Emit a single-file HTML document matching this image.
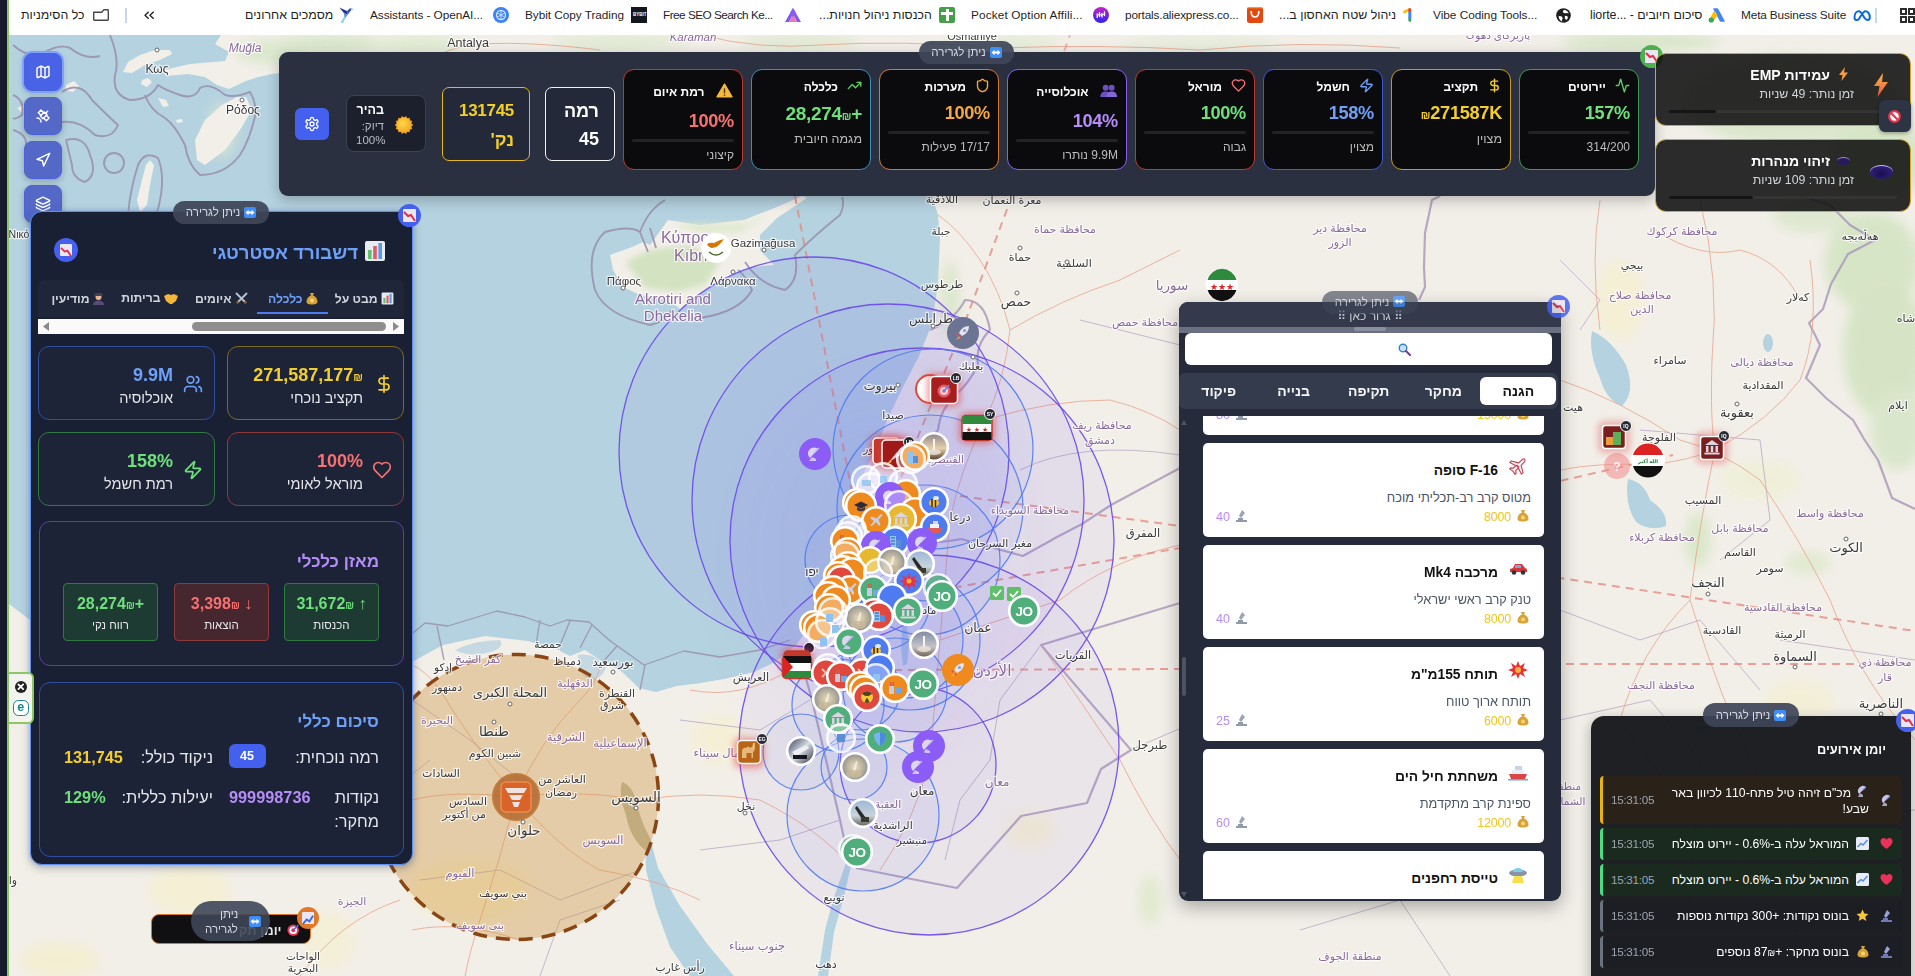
<!DOCTYPE html>
<html lang="he">
<head>
<meta charset="utf-8">
<title>Strategic Dashboard</title>
<style>
*{box-sizing:border-box;margin:0;padding:0}
html,body{width:1915px;height:976px;overflow:hidden;background:#f2efe9;font-family:"Liberation Sans","DejaVu Sans",sans-serif;color:#fff}
.abs{position:absolute}
#strip{position:absolute;left:0;top:0;width:7px;height:976px;background:#171b2d}
#strip2{position:absolute;left:7px;top:0;width:2px;height:976px;background:#8cc665}
#bm{position:absolute;left:9px;top:0;width:1906px;height:35px;background:#fff;color:#1f1f1f;font-size:12.5px}
#bm span{position:absolute;top:8px;white-space:nowrap;line-height:15px}
#bm i{position:absolute;display:block}
#map{position:absolute;left:9px;top:35px;width:1906px;height:941px}
.t{position:absolute;white-space:nowrap;line-height:1}
.r{direction:rtl;text-align:right}
</style>
</head>
<body>
<style>
#bm{left:0;width:1915px}
#bm span{top:8px;font-size:12.4px;color:#1f1f1f}
#bm span.h{direction:rtl}
</style>
<div id="bm">
<span class="h" style="left:21px">כל הסימניות</span>
<svg class="abs" style="left:93px;top:9px" width="16" height="12" viewBox="0 0 16 12" fill="none" stroke="#474747" stroke-width="1.400" stroke-linejoin="round"><path d="M0.700 3.200h8.300l1.700-2.400h3.900a.7.700 0 0 1 .7.700v9.100a.7.700 0 0 1-.7.700H1.400a.7.700 0 0 1-.7-.7z"/></svg>
<i style="left:125px;top:8px;width:1.5px;height:15px;background:#c7d6ea"></i>
<svg class="abs" style="left:144px;top:10.800px" width="10.500" height="8.500" viewBox="0 0 11.500 9.500" fill="none" stroke="#222" stroke-width="1.500" stroke-linejoin="round"><path d="M5.200 0.800L1 4.750 5.200 8.700M10.700 0.800L6.500 4.750 10.700 8.700"/></svg>
<span class="h" style="left:245px">מסמכים אחרונים</span>
<svg class="abs" style="left:339px;top:7px" width="16" height="16" viewBox="0 0 16 16"><path d="M0.300 0.500L8 4l.500 4-4-2.500z" fill="#27348b"/><path d="M8 4l3.500-3.200.800 2.200L8.500 8z" fill="#3f51b5"/><path d="M11.500.800L15 2.200l-2.700.800z" fill="#7ac8ee"/><path d="M4.500 5.500l4 2.500-2.500 3.500-2.200 4H2l3.500-6z" fill="#5c8fe0"/><path d="M5.500 9.500L2 15.500h1.800l2.200-4z" fill="#8ad4f0"/></svg>
<span style="left:370px;font-size:11.8px;letter-spacing:-0.05px">Assistants - OpenAI...</span>
<svg class="abs" style="left:493px;top:7px" width="16" height="16" viewBox="0 0 16 16"><circle cx="8" cy="8" r="8" fill="#3b82f6"/><circle cx="8" cy="8" r="4.500" fill="none" stroke="#cfe2ff" stroke-width="1.3"/><path d="M8 3.500v9M4 5.800l8 4.500M12 5.800l-8 4.500" stroke="#cfe2ff" stroke-width=".9"/></svg>
<span style="left:525px;font-size:11.8px;letter-spacing:-0.04px">Bybit Copy Trading</span>
<i style="left:631px;top:7px;width:16px;height:16px;background:#15171f"></i><div class="t" style="left:633px;top:13px;font-size:4.500px;color:#fff;font-weight:bold">BYBIT</div>
<span style="left:663px;font-size:11.8px;letter-spacing:-0.53px">Free SEO Search Ke...</span>
<svg class="abs" style="left:785px;top:8px" width="16" height="14" viewBox="0 0 16 14"><path d="M8 0 L16 14 L12 14 L8 6 L4 14 L0 14Z" fill="#7c5cf0"/><path d="M8 6 L12 14 L4 14Z" fill="#f472b6"/><path d="M8 0 L11 5 L8 9 L5 5Z" fill="#8b5cf6"/></svg>
<span class="h" style="left:819px">הכנסות ניהול חנויות...</span>
<i style="left:939px;top:7px;width:16px;height:16px;background:#43a047;border-radius:2px"></i><i style="left:946px;top:9px;width:2.500px;height:12px;background:#fff"></i><i style="left:941px;top:12px;width:12px;height:2.500px;background:#fff"></i>
<span style="left:971px;font-size:11.8px;letter-spacing:0.13px">Pocket Option Affili...</span>
<svg class="abs" style="left:1093px;top:7px" width="16" height="16" viewBox="0 0 16 16"><defs><linearGradient id="po" x1="0" y1="0" x2="0" y2="1"><stop offset="0" stop-color="#c822c8"/><stop offset="1" stop-color="#2a22f2"/></linearGradient></defs><circle cx="8" cy="8" r="8" fill="url(#po)"/><path d="M4.200 10.500V7M6.500 9.500V5.500M9 10V6.500M11.500 8.500V4.800" stroke="#fff" stroke-width="1.300" stroke-linecap="round"/><path d="M4.200 8.500L6.500 7.300 9 8.500 11.500 6.500" stroke="#fff" stroke-width="1" fill="none"/></svg>
<span style="left:1125px;font-size:11.8px;letter-spacing:-0.16px">portals.aliexpress.co...</span>
<svg class="abs" style="left:1247px;top:7px" width="16" height="16" viewBox="0 0 16 16"><rect width="16" height="16" rx="2.500" fill="#e2480f"/><path d="M2 0h12a2 2 0 0 1 1.800 1.200H0.200A2 2 0 0 1 2 0z" fill="#f5a02a"/><path d="M4.200 4.500Q4.200 10 8 10T11.800 4.500" stroke="#fff" stroke-width="1.700" fill="none" stroke-linecap="round"/></svg>
<span class="h" style="left:1279px">ניהול שטח האחסון ב...</span>
<svg class="abs" style="left:1403px;top:7px" width="12" height="16" viewBox="0 0 12 16"><path d="M1.400 5L6 2.600" stroke="#fbbc04" stroke-width="2.700" stroke-linecap="round"/><path d="M5.300 2.500a1.500 1.500 0 0 1 3 0V5h-3z" fill="#ea4335"/><rect x="5.300" y="4.500" width="3" height="7.500" fill="#4285f4"/><path d="M5.300 11.500h3v1.700a1.500 1.500 0 0 1-3 0z" fill="#34a853"/></svg>
<span style="left:1433px;font-size:11.8px;letter-spacing:-0.01px">Vibe Coding Tools...</span>
<svg class="abs" style="left:1555.500px;top:7.500px" width="15" height="15" viewBox="0 0 15 15"><circle cx="7.500" cy="7.500" r="7.300" fill="#1f1f1f"/><path d="M8.500 1.800Q6.200 2.600 7 4.300 8 5.600 10 5.200 11.800 4.600 12.600 5.600 12.200 3 8.500 1.800z" fill="#fff"/><path d="M2.600 8.200Q4.600 7.600 6 8.800 7.400 10.200 6.200 11.800 5.200 13 6.600 13.600 3 12.600 2.600 8.200z" fill="#fff"/><path d="M9 8Q10.500 7.400 11.600 8.600 12.400 10 11 11.400 9.600 12.200 9 10.600 8.400 9 9 8z" fill="#fff"/></svg>
<span style="left:1590px;letter-spacing:-0.08px"><span style="position:static;direction:ltr;unicode-bidi:isolate">liorte... - </span><span class="h" style="position:static">סיכום חיובים</span></span>
<svg class="abs" style="left:1708px;top:8px" width="17" height="15" viewBox="0 0 17 15"><path d="M6 1 L9.500 1 L16 13 L12.500 13Z" fill="#4285f4" stroke="#4285f4" stroke-width="1.500" stroke-linejoin="round"/><path d="M6.500 3 L9 7 L5 13.500 L1.500 12Z" fill="#fbbc04" stroke="#fbbc04" stroke-width="1" stroke-linejoin="round"/><circle cx="3.200" cy="12" r="2.600" fill="#34a853"/></svg>
<span style="left:1741px;font-size:11.8px;letter-spacing:-0.13px">Meta Business Suite</span>
<svg class="abs" style="left:1853px;top:10px" width="18" height="11" viewBox="0 0 18 11" fill="none" stroke="#0668e1" stroke-width="2"><path d="M1.500 7.500C1.500 3 4 1.200 5.800 1.200 8.500 1.200 10 6 12 8.500 13 9.800 14 10 14.800 10 16 10 16.800 9 16.800 7.200 16.800 3.500 14.500 1.200 12.500 1.200 10 1.200 8 6 6 8.800 5 10 4.200 10 3.500 10 2.300 10 1.500 9 1.500 7.500Z"/></svg>
<i style="left:1875px;top:8px;width:1.500px;height:15px;background:#c7d6ea"></i>
<svg class="abs" style="left:1899.500px;top:8px" width="15" height="15" viewBox="0 0 15 15" fill="none" stroke="#222" stroke-width="1.900"><rect x="1" y="1" width="5" height="5"/><rect x="9" y="1" width="5" height="5"/><rect x="1" y="9" width="5" height="5"/><rect x="9" y="9" width="5" height="5"/></svg>
</div>
<div id="strip"></div><div id="strip2"></div>
<svg id="map" viewBox="9 35 1906 941" font-family="'Liberation Sans','DejaVu Sans',sans-serif">
<defs>
<filter id="bl6" x="-30%" y="-30%" width="160%" height="160%"><feGaussianBlur stdDeviation="6"/></filter>
<filter id="bl3" x="-30%" y="-30%" width="160%" height="160%"><feGaussianBlur stdDeviation="3"/></filter>
<filter id="bl14" x="-50%" y="-50%" width="200%" height="200%"><feGaussianBlur stdDeviation="14"/></filter>
<filter id="bl40" x="-50%" y="-50%" width="200%" height="200%"><feGaussianBlur stdDeviation="40"/></filter>
<filter id="glow" x="-50%" y="-50%" width="200%" height="200%"><feGaussianBlur stdDeviation="3.500"/></filter>
<clipPath id="cm"><rect x="9" y="35" width="1906" height="941"/></clipPath>
<radialGradient id="ph1"><stop offset="0" stop-color="#e8dcc0"/><stop offset=".6" stop-color="#b8b09a"/><stop offset="1" stop-color="#8a9098"/></radialGradient>
<linearGradient id="ph2" x1="0" y1="0" x2="0" y2="1"><stop offset="0" stop-color="#9ab6d6"/><stop offset=".6" stop-color="#c8d4dc"/><stop offset="1" stop-color="#5a5a50"/></linearGradient>
<linearGradient id="ph3" x1="0" y1="0" x2="0" y2="1"><stop offset="0" stop-color="#8a8490"/><stop offset=".55" stop-color="#e8cfa8"/><stop offset="1" stop-color="#4a3424"/></linearGradient>
<linearGradient id="ph4" x1="0" y1="0" x2="1" y2="1"><stop offset="0" stop-color="#2a3450"/><stop offset=".5" stop-color="#d8dce4"/><stop offset="1" stop-color="#1e2230"/></linearGradient>
<linearGradient id="ph5" x1="0" y1="0" x2="0" y2="1"><stop offset="0" stop-color="#7a86a0"/><stop offset=".6" stop-color="#c4c4c8"/><stop offset="1" stop-color="#6a5848"/></linearGradient>
</defs>
<rect x="9" y="35" width="1906" height="941" fill="#b5d2e0"/>
<path fill="#f2efe9" d="M221,35 L215,44 229,52 225,61 190,64 164,70 166,76 188,74 205,77 217,85 229,89 246,81 258,77 272,74 279,73 300,150 920,150 932,196 938,215 940,239 938,284 932,324 919,356 903,387 888,418 876,449 860,480 849,511 837,550 830,578 820,603 809,628 796,645 775,662 754,672 724,679 698,683.5 677,686 656,692 639,688 621,671 600,660 585,650 570,656 558,650 528,641 485,636 443,645 412,662 300,640 30,620 9,604 9,976 1915,976 1915,35Z"/>
<g filter="url(#bl6)" opacity=".75">
<ellipse cx="330" cy="44" rx="60" ry="9" fill="#cfe3c0"/>
<ellipse cx="270" cy="52" rx="35" ry="12" fill="#d3e5c4"/>
<ellipse cx="420" cy="44" rx="50" ry="8" fill="#d8e8c8"/>
<ellipse cx="620" cy="42" rx="70" ry="8" fill="#dbe8cc"/>
<ellipse cx="1000" cy="42" rx="60" ry="8" fill="#dfe9d0"/>
<ellipse cx="1872" cy="262" rx="48" ry="50" fill="#cfe2bc"/>
<ellipse cx="1885" cy="350" rx="42" ry="70" fill="#cde1ba"/>
<ellipse cx="1898" cy="430" rx="28" ry="40" fill="#d3e4c2"/>
<ellipse cx="1812" cy="215" rx="40" ry="18" fill="#d8e6c8"/>
<ellipse cx="1790" cy="100" rx="110" ry="45" fill="#d4e4c4"/>
<ellipse cx="1880" cy="160" rx="50" ry="40" fill="#cfe2bc"/>
<ellipse cx="1200" cy="44" rx="80" ry="8" fill="#e2ead6"/>
<ellipse cx="950" cy="300" rx="10" ry="40" fill="#d5e4c4"/>
<ellipse cx="930" cy="400" rx="8" ry="30" fill="#dbe6cc"/>
<ellipse cx="1845" cy="950" rx="30" ry="25" fill="#dbe8c8"/>
<ellipse cx="1150" cy="900" rx="12" ry="25" fill="#dce8c8"/>
<ellipse cx="222" cy="130" rx="14" ry="28" fill="#dde8cf"/>
<ellipse cx="1640" cy="42" rx="80" ry="9" fill="#cfe2bc"/>
<ellipse cx="1698" cy="540" rx="13" ry="28" fill="#d3e5c0"/>
<ellipse cx="1808" cy="563" rx="22" ry="12" fill="#dbe8c8"/>
<ellipse cx="1760" cy="480" rx="40" ry="20" fill="#eef0d4"/>
<ellipse cx="800" cy="42" rx="60" ry="7" fill="#d8e6c8"/>
</g>
<g filter="url(#bl6)" opacity=".6">
<ellipse cx="470" cy="890" rx="60" ry="30" fill="#f6eec0"/>
<ellipse cx="720" cy="740" rx="30" ry="25" fill="#f7efcb"/>
<ellipse cx="1620" cy="300" rx="25" ry="40" fill="#f6efc8"/>
<ellipse cx="1480" cy="820" rx="25" ry="35" fill="#f6f0cf"/>
<ellipse cx="1800" cy="700" rx="35" ry="20" fill="#f5efcc"/>
<ellipse cx="1030" cy="830" rx="25" ry="18" fill="#f4edc8"/>
<ellipse cx="190" cy="890" rx="42" ry="24" fill="#f6efc8"/>
<ellipse cx="60" cy="960" rx="40" ry="18" fill="#f5edc4"/>
<ellipse cx="330" cy="940" rx="25" ry="30" fill="#f6efcc"/>
</g>
<g fill="#b5d2e0">
<path d="M645,840 L650,838 658,868 680,906 708,945 734,976 690,976 670,947 656,908 646,870Z"/>
<path d="M847,860 L852,862 843,900 834,932 828,976 818,976 825,930 833,900Z"/>
<path d="M902,626 L907,626 909,645 907,664 903,666 901,650Z"/>
<path d="M1592,331 Q1612,340 1626,365 Q1636,392 1622,406 Q1606,400 1600,378 Q1588,352 1592,331Z"/>
<path d="M1628,479 Q1644,482 1650,500 Q1668,512 1666,526 Q1650,532 1636,522 Q1624,504 1628,479Z"/>
<ellipse cx="1768" cy="343" rx="5" ry="9"/>
<ellipse cx="1700" cy="730" rx="10" ry="4"/>
<path d="M578,655 Q595,652 606,668 Q600,682 588,680 Q578,672 578,655Z" opacity=".75"/>
<path d="M455,650 Q475,640 500,640 Q505,648 490,652 Q470,658 455,650Z" opacity=".75"/>
</g>
<path d="M622,782 Q632,785 636,800 Q640,820 650,838 Q655,850 645,850 Q630,838 626,815 Q618,795 622,782Z" fill="#b9b8a2"/>
<g fill="#f2efe9">
<path d="M246,97 L252,110 240,130 225,150 205,165 197,160 195,140 205,120 222,105 237,97Z"/>
<path d="M123,72 L128,62 140,55 155,50 170,50 172,54 160,60 145,65 132,73Z"/>
<path d="M150,160 L154,165 150,185 147,205 140,212 137,200 142,180 146,165Z"/>
<path d="M66,85 l8,-4 5,5 -6,6 -8,-2z M142,80 l6,-2 4,4 -5,5 -6,-3z M158,98 l8,2 3,6 -6,1z M176,120 l6,-1 1,3 -6,1z M17,108 l6,-3 4,4 -5,4z"/>
<path d="M610,255 L632,247 643,242 650,245 668,220 700,225 744,220 777,207 802,196 807,198 777,218 760,235 760,250 774,265 752,267 735,274 710,287 694,297 680,309 669,300 640,295 623,287 613,270Z"/>
</g>
<path d="M625,262 L650,250 690,245 720,262 705,285 675,292 645,288Z" fill="#d3e2c0" filter="url(#bl3)"/>
<path d="M672,224 L745,224 790,206 770,214 740,232 700,232Z" fill="#dde8cc" filter="url(#bl3)"/><g fill="none" stroke="#9a93ae" stroke-width="1.900" opacity=".9" stroke-linejoin="round">
<path d="M13,45 Q30,60 45,52 T70,48 Q85,60 100,56"/>
<path d="M110,35 Q120,60 115,75 Q112,95 130,100 Q150,100 158,85 Q165,90 180,95 Q195,100 200,88 Q210,82 225,95 Q235,98 250,92 Q255,100 256,112 Q250,140 240,155 Q225,175 200,175 Q188,165 185,145 Q175,125 165,118 Q150,110 145,95"/>
<path d="M62,92 Q80,80 92,100 Q110,118 118,125 Q112,140 95,135 Q80,120 62,122"/>
<path d="M66,140 Q85,135 90,155 Q98,175 85,182 Q72,178 72,165Z"/>
<circle cx="114" cy="163" r="10"/>
<path d="M128,215 Q130,190 138,165 Q145,150 158,158 Q165,175 160,200 Q158,215 150,222"/>
<path d="M13,95 Q25,100 22,115 Q15,120 13,118 M13,130 Q30,135 25,150"/>
<path d="M413,633 L425,623 448,626 497,611 525,617 550,626 567,620 589,622 609,640 644,665 684,651 720,657 760,650 790,640 M437,626 L444,660 M540,620 L536,645 M570,621 L560,645 M592,625 L580,648 M617,646 L600,665 M645,665 L640,690" stroke-width="1.300"/>
<path d="M595,290 Q585,250 605,232 Q630,225 640,232 Q648,210 665,200 M640,232 L648,252 M650,228 L656,248"/>
<path d="M595,290 Q605,315 650,325 Q665,322 672,310 M700,318 Q740,312 752,290 Q745,275 738,270"/>
<path d="M745,262 Q760,285 785,290 Q800,280 795,255 Q815,235 840,215 Q845,205 842,197"/>
</g>
<g fill="none" stroke="#a896b8" stroke-linejoin="round" opacity=".8">
<path stroke-width="2.200" d="M856,868 L957,888 1021,816 1087,803 1101,769 1131,750 1041,645 1180,603"/>
<path stroke-width="2.200" d="M800,657 L812,700 826,760 840,820 850,866"/>
<path stroke-width="2.200" d="M905,540 Q930,545 961,539 L1023,556 1057,537 1082,524 1111,505 1180,468"/>
<path stroke-width="2.200" d="M930,330 Q955,320 965,300 Q985,300 990,330 Q975,345 978,365 Q968,385 955,395 Q940,410 938,430 Q925,445 912,470"/>
<path stroke-width="2.200" d="M1560,720 L1590,690 1700,640 1800,560 1850,520 1915,500" opacity=".0"/>
<path stroke-width="2.200" d="M1800,196 L1830,205 1850,225 1875,240 1848,254 1831,284 1823,309 1809,323 1820,345 1806,378 1826,398 1853,420 1864,439 1878,460 1892,498 1915,509"/>
<path stroke-width="2.200" d="M1440,196 L1432,200 1425,233 1424,267 1425,287 1419,300"/>
<g stroke-width="1" stroke="#b9a9c6">
<path d="M1041,645 L1000,700 990,760 960,800 945,860"/>
<path d="M1080,320 L1180,345"/>
<path d="M1020,470 Q1080,440 1180,455"/>
<path d="M1560,260 L1600,300 1580,330 M1560,610 L1640,640 1700,620 1760,690 M1640,430 L1760,440 1770,520 1720,560 M1700,820 L1915,810 M1780,640 L1915,660 M1560,720 L1650,700 1700,760 1690,900"/>
<path d="M412,700 L470,740 520,780 M420,880 L500,870 560,900 640,870 M430,760 L380,800 M540,976 L560,920 620,900"/>
<path d="M680,720 L760,730 810,700 M700,850 L780,840 840,820"/>
<path d="M1130,750 L1200,720 M1300,930 L1400,900 1450,976"/>
</g></g>
<g fill="none" stroke="#e9a38a" stroke-width="1" opacity=".8">
<path d="M938,215 Q960,230 980,260 Q1000,290 1010,330 Q1005,380 985,420 Q960,470 950,520 Q945,580 940,640 Q935,700 930,760 Q915,820 880,870"/>
<path d="M1010,330 Q1060,300 1120,280 Q1160,260 1180,250"/>
<path d="M985,420 Q1050,400 1110,400 Q1150,410 1180,430"/>
<path d="M940,640 Q1000,620 1060,600 Q1110,560 1180,545"/>
<path d="M1041,645 Q1080,700 1120,760 Q1150,820 1180,860"/>
<path d="M1560,380 Q1620,400 1680,440 Q1720,450 1760,480 Q1800,540 1830,600 Q1860,680 1915,740"/>
<path d="M1700,200 Q1720,280 1712,360 Q1710,420 1715,450 Q1700,520 1690,600 Q1720,700 1760,780 Q1800,860 1860,930"/>
<path d="M1560,470 Q1600,462 1650,465 Q1690,460 1715,450"/>
<path d="M1715,450 Q1770,420 1800,380 Q1820,330 1810,260"/>
<path d="M1690,600 Q1640,650 1620,720 Q1660,780 1700,820 Q1760,880 1800,940"/>
<path d="M516,797 Q540,740 580,700 Q600,680 600,662 M516,797 Q470,740 440,690 Q425,670 412,665 M516,797 Q570,790 630,798 M516,797 Q500,860 480,920 Q470,950 465,976 M516,797 Q450,790 412,800 M516,797 Q560,850 600,870 Q660,880 700,900"/>
<path d="M640,800 Q700,790 760,800 Q820,830 850,866"/>
<path d="M690,690 Q740,700 790,670"/>
<path d="M412,930 Q460,920 520,940 M300,976 Q340,920 400,900"/>
<path d="M300,150 Q400,60 468,45 Q520,40 600,50 M700,35 Q760,50 820,45 Q900,40 1000,48 Q1100,44 1200,50 Q1300,40 1400,48"/>
<path d="M1655,230 Q1700,260 1740,250 Q1780,260 1800,300 M1600,200 Q1590,260 1600,330"/>
</g>
<g fill="none" stroke="#e58b80" stroke-width="2" stroke-dasharray="8 6" opacity=".8">
<path d="M795,196 L852,492"/>
<path d="M1012,196 L962,330 900,480"/>
<path d="M1012,196 L1070,35" opacity=".7"/>
<path d="M940,590 L1180,548 1560,481 1673,455"/>
<path d="M960,496 L1180,526 1560,578 1915,631"/>
<path d="M880,670 L1180,669 1560,664 1915,664"/>
</g><g clip-path="url(#cm)">
<ellipse cx="880" cy="560" rx="120" ry="170" fill="#8a80ee" opacity=".10" filter="url(#bl40)"/>
<circle cx="814" cy="452" r="195" fill="#6a48ea" fill-opacity=".055" stroke="#6a48ea" stroke-width="1.300" stroke-opacity=".9"/>
<circle cx="888" cy="500" r="196" fill="#6a48ea" fill-opacity=".055" stroke="#6a48ea" stroke-width="1.300" stroke-opacity=".9"/>
<circle cx="922" cy="540" r="192" fill="#6a48ea" fill-opacity=".055" stroke="#6a48ea" stroke-width="1.300" stroke-opacity=".9"/>
<circle cx="929" cy="745" r="190" fill="#6a48ea" fill-opacity=".055" stroke="#6a48ea" stroke-width="1.300" stroke-opacity=".9"/>
<circle cx="918" cy="765" r="78" fill="#6a48ea" fill-opacity=".055" stroke="#6a48ea" stroke-width="1.300" stroke-opacity=".9"/>
<circle cx="933" cy="449" r="100" fill="#4f7bf0" fill-opacity=".06" stroke="#4f7bf0" stroke-width="1.200" stroke-opacity=".9"/>
<circle cx="930" cy="508" r="93" fill="#4f7bf0" fill-opacity=".06" stroke="#4f7bf0" stroke-width="1.200" stroke-opacity=".9"/>
<circle cx="925" cy="560" r="75" fill="#4f7bf0" fill-opacity=".06" stroke="#4f7bf0" stroke-width="1.200" stroke-opacity=".9"/>
<circle cx="910" cy="640" r="70" fill="#4f7bf0" fill-opacity=".06" stroke="#4f7bf0" stroke-width="1.200" stroke-opacity=".9"/>
<circle cx="905" cy="640" r="58" fill="#4f7bf0" fill-opacity=".06" stroke="#4f7bf0" stroke-width="1.200" stroke-opacity=".9"/>
<circle cx="863" cy="815" r="76" fill="#4f7bf0" fill-opacity=".06" stroke="#4f7bf0" stroke-width="1.200" stroke-opacity=".9"/>
<circle cx="801" cy="752" r="38" fill="#4f7bf0" fill-opacity=".06" stroke="#4f7bf0" stroke-width="1.200" stroke-opacity=".9"/>
<circle cx="854" cy="767" r="33" fill="#4f7bf0" fill-opacity=".06" stroke="#4f7bf0" stroke-width="1.200" stroke-opacity=".9"/>
<circle cx="838" cy="705" r="46" fill="#4f7bf0" fill-opacity=".06" stroke="#4f7bf0" stroke-width="1.200" stroke-opacity=".9"/>
<circle cx="880" cy="600" r="50" fill="#4f7bf0" fill-opacity=".06" stroke="#4f7bf0" stroke-width="1.200" stroke-opacity=".9"/>
<circle cx="850" cy="560" r="45" fill="#4f7bf0" fill-opacity=".06" stroke="#4f7bf0" stroke-width="1.200" stroke-opacity=".9"/>
<circle cx="860" cy="690" r="40" fill="#4f7bf0" fill-opacity=".06" stroke="#4f7bf0" stroke-width="1.200" stroke-opacity=".9"/>
<circle cx="895" cy="690" r="52" fill="#4f7bf0" fill-opacity=".06" stroke="#4f7bf0" stroke-width="1.200" stroke-opacity=".9"/>
</g>
<circle cx="516" cy="797" r="142.500" fill="#cf9846" fill-opacity=".40" stroke="#8a4513" stroke-width="3.500" stroke-dasharray="14 9"/>
<circle cx="516" cy="797" r="23" fill="#a85a1e" fill-opacity=".75" stroke="#c47a3a" stroke-width="2"/>
<rect x="501" y="782" width="30" height="30" rx="5" fill="#d8642a" stroke="#f08a4a" stroke-width="1.500"/>
<path d="M505,788 h22 l-3,5 h-16z M509,795 h14 l-3,5 h-8z M512,802 h8 l-2,5 h-4z" fill="#f1e4e0"/><g text-anchor="middle" stroke="#fff" stroke-opacity=".75" stroke-width="2.400" paint-order="stroke" stroke-linejoin="round" font-family="'Liberation Sans','DejaVu Sans',sans-serif">
<text x="157" y="73" font-size="12" fill="#3a3a3a">Κως</text>
<text x="243" y="114" font-size="12" fill="#3a3a3a">Ρόδος</text>
<text x="245" y="52" font-size="12" fill="#8a6a9c" font-style="italic">Muğla</text>
<text x="468" y="47" font-size="12.5" fill="#3a3a3a">Antalya</text>
<text x="19" y="238" font-size="10.5" fill="#3a3a3a">Νικό</text>
<text x="693" y="41" font-size="11.5" fill="#8a6a9c" font-style="italic">Karaman</text>
<text x="972" y="40" font-size="11" fill="#3a3a3a">Osmaniye</text>
<text x="1498" y="39" font-size="10.5" fill="#8a6a9c">پارێزگای دهۆک</text>
<text x="689" y="243" font-size="16" fill="#8a6a9c">Κύπρος</text>
<text x="695" y="261" font-size="16" fill="#8a6a9c">Kıbrıs</text>
<text x="763" y="247" font-size="11.5" fill="#3a3a3a">Gazimağusa</text>
<text x="624" y="285" font-size="11.5" fill="#3a3a3a">Πάφος</text>
<text x="733" y="285" font-size="11.5" fill="#3a3a3a">Λάρνακα</text>
<text x="673" y="304" font-size="15" fill="#8a6a9c">Akrotiri and</text>
<text x="673" y="321" font-size="15" fill="#8a6a9c">Dhekelia</text>
<text x="942" y="203" font-size="11" fill="#3a3a3a">اللاذقية</text>
<text x="1012" y="204" font-size="11" fill="#3a3a3a">معرة النعمان</text>
<text x="941" y="235" font-size="10.5" fill="#3a3a3a">جبلة</text>
<text x="1065" y="233" font-size="11" fill="#8a6a9c">محافظة حماة</text>
<text x="1020" y="261" font-size="11" fill="#3a3a3a">حماة</text>
<text x="1074" y="267" font-size="11" fill="#3a3a3a">السلمية</text>
<text x="942" y="288" font-size="11" fill="#3a3a3a">طرطوس</text>
<text x="1016" y="306" font-size="12.5" fill="#3a3a3a">حمص</text>
<text x="1172" y="290" font-size="13.5" fill="#8a6a9c">سوريا</text>
<text x="1145" y="326" font-size="11" fill="#8a6a9c">محافظة حمص</text>
<text x="931" y="323" font-size="12.5" fill="#3a3a3a">طرابلس</text>
<text x="971" y="370" font-size="11" fill="#3a3a3a">بعلبك</text>
<text x="880" y="390" font-size="13" fill="#3a3a3a">بيروت</text>
<text x="893" y="419" font-size="11" fill="#3a3a3a">صيدا</text>
<text x="1102" y="429" font-size="11" fill="#8a6a9c">محافظة ريف</text>
<text x="1100" y="444" font-size="11" fill="#8a6a9c">دمشق</text>
<text x="945" y="463" font-size="10.5" fill="#8a6a9c">القنيطرة</text>
<text x="873" y="452" font-size="10.5" fill="#3a3a3a">صور</text>
<text x="960" y="521" font-size="11.5" fill="#3a3a3a">درعا</text>
<text x="1030" y="514" font-size="11" fill="#8a6a9c">محافظة السويداء</text>
<text x="1000" y="547" font-size="11" fill="#3a3a3a">مغير السرحان</text>
<text x="1143" y="537" font-size="11.5" fill="#3a3a3a">المفرق</text>
<text x="1340" y="232" font-size="11" fill="#8a6a9c">محافظة دير</text>
<text x="1340" y="246" font-size="11" fill="#8a6a9c">الزور</text>
<text x="812" y="576" font-size="12" fill="#3a3a3a">יפו</text>
<text x="926" y="614" font-size="11" fill="#3a3a3a">مادبا</text>
<text x="978" y="632" font-size="12.5" fill="#3a3a3a">عمان</text>
<text x="992" y="676" font-size="15.5" fill="#8a6a9c">الأردن</text>
<text x="1073" y="659" font-size="11.5" fill="#3a3a3a">القريات</text>
<text x="1150" y="749" font-size="11.5" fill="#3a3a3a">طبرجل</text>
<text x="922" y="795" font-size="12" fill="#3a3a3a">معان</text>
<text x="997" y="786" font-size="12" fill="#8a6a9c">معان</text>
<text x="888" y="808" font-size="11" fill="#8a6a9c">العقبة</text>
<text x="893" y="829" font-size="11" fill="#3a3a3a">الراشدية</text>
<text x="912" y="844" font-size="10.5" fill="#3a3a3a">منيشير</text>
<text x="834" y="901" font-size="11" fill="#3a3a3a">نويبع</text>
<text x="826" y="968" font-size="11" fill="#3a3a3a">دهب</text>
<text x="613" y="666" font-size="12" fill="#3a3a3a">بورسعيد</text>
<text x="751" y="681" font-size="11.5" fill="#3a3a3a">العريش</text>
<text x="722" y="757" font-size="11.5" fill="#8a6a9c">شمال سيناء</text>
<text x="746" y="810" font-size="11" fill="#3a3a3a">نخل</text>
<text x="757" y="950" font-size="11.5" fill="#8a6a9c">جنوب سيناء</text>
<text x="680" y="971" font-size="11" fill="#3a3a3a">رأس غارب</text>
<text x="510" y="697" font-size="13" fill="#3a3a3a">المحلة الكبرى</text>
<text x="494" y="736" font-size="13.5" fill="#3a3a3a">طنطا</text>
<text x="495" y="757" font-size="11" fill="#3a3a3a">شبين الكوم</text>
<text x="566" y="741" font-size="11.5" fill="#8a6a9c">الشرقية</text>
<text x="620" y="747" font-size="11.5" fill="#8a6a9c">الإسماعيلية</text>
<text x="441" y="777" font-size="11" fill="#3a3a3a">السادات</text>
<text x="562" y="783" font-size="11" fill="#3a3a3a">العاشر من</text>
<text x="561" y="796" font-size="11" fill="#3a3a3a">رمضان</text>
<text x="468" y="805" font-size="11" fill="#3a3a3a">السادس</text>
<text x="464" y="818" font-size="11" fill="#3a3a3a">من أكتوبر</text>
<text x="524" y="835" font-size="13.5" fill="#3a3a3a">حلوان</text>
<text x="636" y="802" font-size="14" fill="#3a3a3a">السويس</text>
<text x="603" y="844" font-size="11.5" fill="#8a6a9c">السويس</text>
<text x="460" y="877" font-size="11.5" fill="#8a6a9c">الفيوم</text>
<text x="503" y="897" font-size="11" fill="#3a3a3a">بني سويف</text>
<text x="480" y="929" font-size="11" fill="#8a6a9c">بنى سويف</text>
<text x="447" y="691" font-size="11" fill="#3a3a3a">دمنهور</text>
<text x="443" y="671" font-size="10.5" fill="#3a3a3a">إدكو</text>
<text x="478" y="663" font-size="11" fill="#8a6a9c">كفر الشيخ</text>
<text x="567" y="665" font-size="11" fill="#3a3a3a">دمياط</text>
<text x="548" y="648" font-size="10.5" fill="#3a3a3a">جمصة</text>
<text x="575" y="687" font-size="11" fill="#8a6a9c">الدقهلية</text>
<text x="617" y="697" font-size="11" fill="#3a3a3a">القنطرة</text>
<text x="612" y="709" font-size="11" fill="#3a3a3a">شرق</text>
<text x="437" y="724" font-size="11" fill="#8a6a9c">البحيرة</text>
<text x="352" y="905" font-size="11" fill="#8a6a9c">الجيزة</text>
<text x="303" y="960" font-size="10.5" fill="#3a3a3a">الواحات</text>
<text x="303" y="972" font-size="10.5" fill="#3a3a3a">البحرية</text>
<text x="13" y="884" font-size="11" fill="#3a3a3a">وا</text>
<text x="1682" y="235" font-size="11" fill="#8a6a9c">محافظة كركوك</text>
<text x="1632" y="269" font-size="11" fill="#3a3a3a">بيجي</text>
<text x="1640" y="299" font-size="11" fill="#8a6a9c">محافظة صلاح</text>
<text x="1642" y="313" font-size="11" fill="#8a6a9c">الدين</text>
<text x="1670" y="364" font-size="11" fill="#3a3a3a">سامراء</text>
<text x="1762" y="366" font-size="11" fill="#8a6a9c">محافظة ديالى</text>
<text x="1763" y="389" font-size="11" fill="#3a3a3a">المقدادية</text>
<text x="1737" y="417" font-size="13" fill="#3a3a3a">بعقوبة</text>
<text x="1659" y="441" font-size="11" fill="#3a3a3a">الفلوجة</text>
<text x="1573" y="411" font-size="11" fill="#3a3a3a">هيت</text>
<text x="1703" y="504" font-size="11" fill="#3a3a3a">المسيب</text>
<text x="1740" y="532" font-size="11" fill="#8a6a9c">محافظة بابل</text>
<text x="1662" y="541" font-size="11" fill="#8a6a9c">محافظة كربلاء</text>
<text x="1740" y="556" font-size="11" fill="#3a3a3a">القاسم</text>
<text x="1770" y="572" font-size="11" fill="#3a3a3a">سومر</text>
<text x="1708" y="587" font-size="13" fill="#3a3a3a">النجف</text>
<text x="1830" y="517" font-size="11" fill="#8a6a9c">محافظة واسط</text>
<text x="1846" y="552" font-size="13" fill="#3a3a3a">الكوت</text>
<text x="1783" y="611" font-size="11" fill="#8a6a9c">محافظة القادسية</text>
<text x="1722" y="634" font-size="11" fill="#3a3a3a">القادسية</text>
<text x="1790" y="638" font-size="11" fill="#3a3a3a">الرميثة</text>
<text x="1795" y="661" font-size="13" fill="#3a3a3a">السماوة</text>
<text x="1885" y="666" font-size="11" fill="#8a6a9c">محافظة ذي</text>
<text x="1885" y="681" font-size="11" fill="#8a6a9c">قار</text>
<text x="1661" y="689" font-size="11" fill="#8a6a9c">محافظة النجف</text>
<text x="1881" y="708" font-size="13" fill="#3a3a3a">الناصرية</text>
<text x="1860" y="240" font-size="11" fill="#3a3a3a">هەڵەبجە</text>
<text x="1798" y="301" font-size="11" fill="#3a3a3a">كەلار</text>
<text x="1898" y="409" font-size="11" fill="#3a3a3a">ايلام</text>
<text x="1906" y="322" font-size="11" fill="#3a3a3a">شاه</text>
<text x="1567" y="790" font-size="10.5" fill="#8a6a9c">منطقة</text>
<text x="1567" y="805" font-size="10.5" fill="#8a6a9c">الشمالية</text>
<text x="1350" y="960" font-size="11" fill="#8a6a9c">منطقة الجوف</text>
</g>
<g fill="#fff" stroke="#666" stroke-width="1">
<circle cx="157" cy="50" r="2"/>
<circle cx="242" cy="100" r="2"/>
<circle cx="468" cy="55" r="2"/>
<circle cx="764" cy="250" r="2"/>
<circle cx="733" cy="272" r="2"/>
<circle cx="623" cy="288" r="2"/>
<circle cx="1017" cy="293" r="2"/>
<circle cx="1020" cy="248" r="2"/>
<circle cx="1067" cy="262" r="2"/>
<circle cx="933" cy="326" r="2"/>
<circle cx="973" cy="357" r="2"/>
<circle cx="898" cy="385" r="2"/>
<circle cx="1737" cy="404" r="2"/>
<circle cx="1846" cy="539" r="2"/>
<circle cx="1708" cy="594" r="2"/>
<circle cx="1795" cy="667" r="2"/>
<circle cx="1881" cy="714" r="2"/>
<circle cx="613" cy="672" r="2"/>
<circle cx="494" cy="722" r="2"/>
<circle cx="510" cy="704" r="2"/>
<circle cx="636" cy="808" r="2"/>
<circle cx="523" cy="822" r="2"/>
<circle cx="745" cy="813" r="2"/>
</g><circle cx="716" cy="248" r="15" fill="#fff"/><path d="M707,244 q3,-2 7,-1 q5,-3 10,-4 q-3,4 -5,6 q-3,3 -7,3 q-4,-1 -5,-4z" fill="#d57800"/><path d="M709,252 q7,6 14,0" stroke="#4e6b2a" stroke-width="1.500" fill="none"/>
<circle cx="1222" cy="285" r="15.500" fill="#fff" stroke="#fff" stroke-width="2"/><path d="M1207.500,280 a15,15 0 0 1 29,0z" fill="#2e8b3d"/><path d="M1207.500,290 a15,15 0 0 0 29,0z" fill="#111"/><text x="1222" y="289.500" text-anchor="middle" font-size="9" fill="#d22">★★★</text>
<circle cx="963" cy="333" r="16" fill="#6b7593" opacity="1"/>
<path d="M969,326 q-7,0 -10,7 l3,3 q7,-3 7,-10z" fill="#e8e4ee"/><circle cx="964.5" cy="330.5" r="1.600" fill="#6fa8e8"/><path d="M959,333 l-3,1 2,2z M962,336 l-1,3 -2,-2z" fill="#e8485a"/><path d="M959,336 l-3,4 4,-2z" fill="#f7a83a"/>
<circle cx="930" cy="389" r="14" fill="#fff" stroke="#e0483e" stroke-width="2"/>
<rect x="927.5" y="373.5" width="33" height="33" rx="6" fill="#e03a3a" opacity=".55" filter="url(#glow)"/>
<rect x="930.5" y="376.5" width="27" height="27" rx="4" fill="#a81e1e" stroke="#fff" stroke-width="1.500"/>
<circle cx="944" cy="391" r="6.500" fill="#e85a6a"/><circle cx="944" cy="391" r="4" fill="#f4d0d4"/><circle cx="944" cy="391" r="1.800" fill="#e85a6a"/><path d="M944,391 l5,-6" stroke="#5a8ae0" stroke-width="1.800"/>
<circle cx="956" cy="378" r="5.500" fill="#2a2a35" stroke="#fff" stroke-width="1"/><text x="956" y="380" text-anchor="middle" font-size="5" font-weight="bold" fill="#fff">LB</text>
<rect x="959.0" y="412.5" width="36" height="31" rx="6" fill="#e03a3a" opacity=".55" filter="url(#glow)"/>
<rect x="962.0" y="415.5" width="30" height="25" rx="4" fill="#fff" stroke="#c0392b" stroke-width="1.500"/>
<rect x="962.500" y="416" width="29" height="8" fill="#2e8b3d"/><rect x="962.500" y="432" width="29" height="8" fill="#111"/><text x="977" y="431.500" text-anchor="middle" font-size="7" fill="#d22">★ ★ ★</text>
<circle cx="990" cy="414" r="5.500" fill="#2a2a35" stroke="#fff" stroke-width="1"/><text x="990" y="416" text-anchor="middle" font-size="5" font-weight="bold" fill="#fff">SY</text>
<circle cx="815" cy="454" r="16" fill="#8b5cf6" opacity="1"/>
<path d="M810,458 a6,6 0 0 1 8,-9z" fill="#ddd6f3"/><path d="M814,453 l5,-5" stroke="#c9bff0" stroke-width="1.200"/><path d="M809,461 l3,-4 4,2 v2z" fill="#cfc6ee"/>
<rect x="870.0" y="435.0" width="32" height="32" rx="6" fill="#e03a3a" opacity=".55" filter="url(#glow)"/>
<rect x="873.0" y="438.0" width="26" height="26" rx="4" fill="#c0392b" stroke="#fff" stroke-width="1.500"/>
<rect x="879.0" y="437.0" width="34" height="34" rx="6" fill="#e03a3a" opacity=".55" filter="url(#glow)"/>
<rect x="882.0" y="440.0" width="28" height="28" rx="4" fill="#a01a1a" stroke="#fff" stroke-width="1.500"/>
<path d="M889,462 l8,-10 3,3z" fill="#e8d0d0"/><path d="M887,464 l3,-4 2,2z" fill="#f7a83a"/>
<circle cx="909" cy="442" r="5.500" fill="#2a2a35" stroke="#fff" stroke-width="1"/><text x="909" y="444" text-anchor="middle" font-size="5" font-weight="bold" fill="#fff">LB</text>
<circle cx="934" cy="447" r="13.8" fill="url(#ph3)" stroke="#fff" stroke-width="2.600"/>
<path d="M933,451 v-12 h2 v12z" fill="#f8f4ee"/><ellipse cx="934" cy="452" rx="7" ry="3" fill="#e8e0d8" opacity=".85"/>
<circle cx="915" cy="456" r="13.8" fill="#ef8a1f" stroke="#fff" stroke-width="2.600" opacity="1"/>
<circle cx="911" cy="459" r="13.8" fill="#fff" fill-opacity=".35" stroke="#fff" stroke-width="2.600" opacity="0.85"/>
<rect x="907" y="452" width="6" height="11" fill="#8fc3f0"/><rect x="913" y="456" width="5" height="7" fill="#5a8fd8"/>
<circle cx="866" cy="480" r="13.8" fill="#fff" fill-opacity=".35" stroke="#fff" stroke-width="2.600" opacity="0.85"/>
<circle cx="883" cy="477" r="13.8" fill="#fff" fill-opacity=".35" stroke="#fff" stroke-width="2.600" opacity="0.85"/>
<circle cx="871" cy="487" r="13.8" fill="#fff" fill-opacity=".35" stroke="#fff" stroke-width="2.600" opacity="0.85"/>
<circle cx="903" cy="484" r="13.8" fill="#fff" fill-opacity=".35" stroke="#fff" stroke-width="2.600" opacity="0.85"/>
<rect x="862" y="480" width="9" height="6" fill="#8fc3f0" opacity=".8"/><rect x="880" y="476" width="7" height="7" fill="#8fc3f0" opacity=".8"/>
<circle cx="906" cy="494" r="13.8" fill="#ef8a1f" stroke="#fff" stroke-width="2.600" opacity="1"/>
<circle cx="890" cy="497" r="15" fill="#8b5cf6" opacity="1"/>
<path d="M885,501 a6,6 0 0 1 8,-9z" fill="#ddd6f3"/><path d="M889,496 l5,-5" stroke="#c9bff0" stroke-width="1.200"/><path d="M884,504 l3,-4 4,2 v2z" fill="#cfc6ee"/>
<circle cx="899" cy="505" r="13.8" fill="#fff" fill-opacity=".35" stroke="#fff" stroke-width="2.600" opacity="0.85"/>
<circle cx="915" cy="513" r="14.8" fill="#ef8a1f" stroke="#fff" stroke-width="2.600" opacity="1"/>
<circle cx="934" cy="502" r="13.8" fill="#4f7bf0" stroke="#fff" stroke-width="2.600" opacity="1"/>
<ellipse cx="934" cy="503" rx="5" ry="4" fill="#f7c03a"/><path d="M932,499 v8 M935.5,499 v8" stroke="#3a2a1a" stroke-width="1.500"/><ellipse cx="936" cy="498" rx="3" ry="2" fill="#dfe9f7"/>
<circle cx="857" cy="503" r="13.8" fill="#ef8a1f" stroke="#fff" stroke-width="2.600" opacity="1"/>
<circle cx="861" cy="506" r="14.8" fill="#ef8a1f" stroke="#fff" stroke-width="2.600" opacity="1"/>
<path d="M854,505 l7,-3.500 7,3.500 -7,3.500z" fill="#2a2a3a"/><path d="M857,507 v3 q4,2.500 8,0 v-3 l-4,2z" fill="#3a3a4a"/>
<circle cx="901" cy="519" r="14.8" fill="#e8b830" stroke="#fff" stroke-width="2.600" opacity="1"/>
<path d="M894,517 l7,-5 7,5z M895,518 h2.500 v6 h-2.500z M899.75,518 h2.500 v6 h-2.500z M904.5,518 h2.500 v6 h-2.500z M893.5,524.5 h15 v2 h-15z" fill="#d9d5e0"/>
<circle cx="876" cy="521" r="13.8" fill="#ef8a1f" stroke="#fff" stroke-width="2.600" opacity="1"/>
<path d="M870,526 l4,-5 -4,-3 1.500,-1.500 5,2 4,-4 q2,-1 2,1 l-4,4 2,5 -1.500,1.500 -3,-4 -4,4z" fill="#c7cfe0"/>
<circle cx="935" cy="527" r="13.8" fill="#4f7bf0" stroke="#fff" stroke-width="2.600" opacity="1"/>
<path d="M928,528 h14 l-2,5 h-10z" fill="#e05a5a"/><rect x="930" y="524" width="9" height="4" fill="#eef2f8"/><rect x="933" y="521" width="5" height="3" fill="#cdd8ea"/>
<circle cx="852" cy="530" r="13.8" fill="#fff" fill-opacity=".35" stroke="#fff" stroke-width="2.600" opacity="0.85"/>
<circle cx="848" cy="536" r="13.8" fill="#fff" fill-opacity=".35" stroke="#fff" stroke-width="2.600" opacity="0.85"/>
<circle cx="895" cy="541" r="13.8" fill="#4f7bf0" stroke="#fff" stroke-width="2.600" opacity="1"/>
<rect x="890" y="536" width="6" height="11" fill="#8fc3f0"/><rect x="896" y="540" width="5" height="7" fill="#5a8fd8"/><path d="M891,538 h4 M891,541 h4 M891,544 h4" stroke="#2a5aa8" stroke-width="1"/>
<circle cx="845" cy="541" r="13.8" fill="#ef8a1f" stroke="#fff" stroke-width="2.600" opacity="1"/>
<rect x="839" y="539" width="5" height="8" fill="#c9ccd8"/><rect x="845" y="541" width="6" height="6" fill="#6fa8e8"/><rect x="840" y="535" width="1.500" height="4" fill="#d85a4a"/><rect x="842.5" y="535" width="1.500" height="4" fill="#d85a4a"/>
<circle cx="876" cy="546" r="15" fill="#8b5cf6" opacity="1"/>
<path d="M871,550 a6,6 0 0 1 8,-9z" fill="#ddd6f3"/><path d="M875,545 l5,-5" stroke="#c9bff0" stroke-width="1.200"/><path d="M870,553 l3,-4 4,2 v2z" fill="#cfc6ee"/>
<circle cx="922" cy="543" r="15" fill="#8b5cf6" opacity="1"/>
<path d="M917,547 a6,6 0 0 1 8,-9z" fill="#ddd6f3"/><path d="M921,542 l5,-5" stroke="#c9bff0" stroke-width="1.200"/><path d="M916,550 l3,-4 4,2 v2z" fill="#cfc6ee"/>
<circle cx="848" cy="552" r="13.8" fill="#ef8a1f" stroke="#fff" stroke-width="2.600" opacity="1"/>
<circle cx="845" cy="556" r="13.8" fill="#fff" fill-opacity=".35" stroke="#fff" stroke-width="2.600" opacity="0.85"/>
<circle cx="870" cy="560" r="12.8" fill="#e8b830" stroke="#fff" stroke-width="2.600" opacity="1"/>
<circle cx="892" cy="562" r="13.8" fill="url(#ph1)" stroke="#fff" stroke-width="2.600"/>
<path d="M889,568 l4,-12 1.500,0.500 -2.500,12z" fill="#f4ead8"/><ellipse cx="891" cy="569" rx="8" ry="4" fill="#c8b898" opacity=".8"/>
<circle cx="920" cy="564" r="13.8" fill="url(#ph2)" stroke="#fff" stroke-width="2.600"/>
<path d="M914,557 l9,12 -3,3 -8,-13z" fill="#2a2a28"/><rect x="918" y="568" width="8" height="5" fill="#3a3a30"/>
<circle cx="848" cy="566" r="13.8" fill="#ef8a1f" stroke="#fff" stroke-width="2.600" opacity="1"/>
<circle cx="843" cy="570" r="13.8" fill="#ef8a1f" stroke="#fff" stroke-width="2.600" opacity="1"/>
<circle cx="852" cy="572" r="13.8" fill="#ef8a1f" stroke="#fff" stroke-width="2.600" opacity="1"/>
<circle cx="838" cy="576" r="13.8" fill="#ef8a1f" stroke="#fff" stroke-width="2.600" opacity="1"/>
<circle cx="878" cy="573" r="13.8" fill="#fff" fill-opacity=".35" stroke="#fff" stroke-width="2.600" opacity="0.85"/>
<circle cx="841" cy="580" r="13.8" fill="#e0483e" stroke="#fff" stroke-width="2.600" opacity="1"/>
<circle cx="850" cy="590" r="13.8" fill="#ef8a1f" stroke="#fff" stroke-width="2.600" opacity="1"/>
<path d="M844,595 l4,-5 -4,-3 1.500,-1.500 5,2 4,-4 q2,-1 2,1 l-4,4 2,5 -1.500,1.500 -3,-4 -4,4z" fill="#c7cfe0"/>
<circle cx="873" cy="590" r="13.8" fill="#4fae7b" stroke="#fff" stroke-width="2.600" opacity="1"/>
<rect x="867" y="588" width="5" height="8" fill="#c9ccd8"/><rect x="873" y="590" width="6" height="6" fill="#6fa8e8"/><rect x="868" y="584" width="1.500" height="4" fill="#d85a4a"/><rect x="870.5" y="584" width="1.500" height="4" fill="#d85a4a"/>
<circle cx="909" cy="581" r="13.8" fill="#4f7bf0" stroke="#fff" stroke-width="2.600" opacity="1"/>
<path d="M909,573 l2,5 5,-3 -2,5 5,1 -5,2 2,5 -5,-3 -2,5 -2,-5 -5,3 2,-5 -5,-2 5,-1 -2,-5 5,3z" fill="#e8324a"/><circle cx="909" cy="581" r="2.500" fill="#f7b23a"/>
<circle cx="833" cy="590" r="13.8" fill="#ef8a1f" stroke="#fff" stroke-width="2.600" opacity="1"/>
<circle cx="828" cy="596" r="13.8" fill="#ef8a1f" stroke="#fff" stroke-width="2.600" opacity="1"/>
<circle cx="836" cy="600" r="13.8" fill="#ef8a1f" stroke="#fff" stroke-width="2.600" opacity="1"/>
<circle cx="938" cy="588" r="13.8" fill="#4fae7b" stroke="#fff" stroke-width="2.600" opacity="0.8"/>
<circle cx="942" cy="596" r="14.8" fill="#4fae7b" stroke="#fff" stroke-width="2.600" opacity="1"/>
<text x="942" y="601" text-anchor="middle" font-size="13.500" font-weight="bold" fill="#fff" letter-spacing="-.5">JO</text>
<circle cx="892" cy="598" r="13.8" fill="#4f7bf0" stroke="#fff" stroke-width="2.600" opacity="1"/>
<circle cx="908" cy="611" r="13.8" fill="#4fae7b" stroke="#fff" stroke-width="2.600" opacity="1"/>
<path d="M901,609 l7,-5 7,5z M902,610 h2.500 v6 h-2.500z M906.75,610 h2.500 v6 h-2.500z M911.5,610 h2.500 v6 h-2.500z M900.5,616.5 h15 v2 h-15z" fill="#d9d5e0"/>
<circle cx="874" cy="613" r="13.8" fill="#e0483e" stroke="#fff" stroke-width="2.600" opacity="1"/>
<circle cx="879" cy="616" r="13.8" fill="#e0483e" stroke="#fff" stroke-width="2.600" opacity="1"/>
<rect x="874" y="611" width="6" height="11" fill="#8fc3f0"/><rect x="880" y="615" width="5" height="7" fill="#5a8fd8"/><path d="M875,613 h4 M875,616 h4 M875,619 h4" stroke="#2a5aa8" stroke-width="1"/>
<circle cx="859" cy="618" r="13.8" fill="url(#ph1)" stroke="#fff" stroke-width="2.600"/>
<path d="M856,624 l4,-12 1.500,0.500 -2.500,12z" fill="#f4ead8"/><ellipse cx="858" cy="625" rx="8" ry="4" fill="#c8b898" opacity=".8"/>
<circle cx="829" cy="608" r="13.8" fill="#ef8a1f" stroke="#fff" stroke-width="2.600" opacity="1"/>
<circle cx="833" cy="612" r="13.8" fill="#fff" fill-opacity=".35" stroke="#fff" stroke-width="2.600" opacity="0.85"/>
<circle cx="814" cy="625" r="13.8" fill="#ef8a1f" stroke="#fff" stroke-width="2.600" opacity="1"/>
<rect x="808" y="623" width="5" height="8" fill="#c9ccd8"/><rect x="814" y="625" width="6" height="6" fill="#6fa8e8"/><rect x="809" y="619" width="1.500" height="4" fill="#d85a4a"/><rect x="811.5" y="619" width="1.500" height="4" fill="#d85a4a"/>
<circle cx="818" cy="628" r="13.8" fill="#ef8a1f" stroke="#fff" stroke-width="2.600" opacity="1"/>
<circle cx="822" cy="634" r="13.8" fill="#fff" fill-opacity=".35" stroke="#fff" stroke-width="2.600" opacity="0.85"/>
<circle cx="830" cy="622" r="13.8" fill="#fff" fill-opacity=".35" stroke="#fff" stroke-width="2.600" opacity="0.85"/>
<rect x="826" y="614" width="7" height="8" fill="#8fc3f0"/><rect x="832" y="625" width="7" height="8" fill="#8fc3f0"/><rect x="820" y="638" width="7" height="8" fill="#8fc3f0"/>
<circle cx="849" cy="642" r="13.8" fill="#4fae7b" stroke="#fff" stroke-width="2.600" opacity="1"/>
<path d="M844,646 a6,6 0 0 1 8,-9z" fill="#ddd6f3"/><path d="M848,641 l5,-5" stroke="#c9bff0" stroke-width="1.200"/><path d="M843,649 l3,-4 4,2 v2z" fill="#cfc6ee"/>
<circle cx="876" cy="650" r="13.8" fill="#4f7bf0" stroke="#fff" stroke-width="2.600" opacity="1"/>
<ellipse cx="876" cy="651" rx="5" ry="4" fill="#f7c03a"/><path d="M874,647 v8 M877.5,647 v8" stroke="#3a2a1a" stroke-width="1.500"/><ellipse cx="878" cy="646" rx="3" ry="2" fill="#dfe9f7"/>
<circle cx="924" cy="644" r="13.8" fill="url(#ph5)" stroke="#fff" stroke-width="2.600"/>
<path d="M923,648 v-12 h2 v12z" fill="#f8f4ee"/><ellipse cx="924" cy="649" rx="7" ry="3" fill="#e8e0d8" opacity=".85"/>
<circle cx="809" cy="648" r="5.500" fill="#241a3a" stroke="#fff" stroke-width="1.200"/>
<rect x="990" y="586" width="14" height="14" rx="1.500" fill="#5fbf6a"/><path d="M993,593 l3,3 5,-6" stroke="#fff" stroke-width="1.800" fill="none"/><rect x="1007" y="587" width="14" height="14" rx="1.500" fill="#5fbf6a"/><path d="M1010,594 l3,3 5,-6" stroke="#fff" stroke-width="1.800" fill="none"/>
<circle cx="1024" cy="611" r="14.8" fill="#4fae7b" stroke="#fff" stroke-width="2.600" opacity="1"/>
<text x="1024" y="616" text-anchor="middle" font-size="13.500" font-weight="bold" fill="#fff" letter-spacing="-.5">JO</text>
<circle cx="958" cy="670" r="16" fill="#ef8a1f" opacity="1"/>
<path d="M964,663 q-7,0 -10,7 l3,3 q7,-3 7,-10z" fill="#e8e4ee"/><circle cx="959.5" cy="667.5" r="1.600" fill="#6fa8e8"/><path d="M954,670 l-3,1 2,2z M957,673 l-1,3 -2,-2z" fill="#e8485a"/><path d="M954,673 l-3,4 4,-2z" fill="#f7a83a"/>
<rect x="781.0" y="648.0" width="32" height="26" rx="6" fill="#e03a3a" opacity=".55" filter="url(#glow)"/>
<rect x="784.0" y="651.0" width="26" height="20" rx="4" fill="#c0392b" stroke="#c0392b" stroke-width="1.500"/>
<rect x="782.5" y="655.5" width="29" height="23" rx="4" fill="#fff" stroke="#c0392b" stroke-width="1.500"/>
<rect x="783" y="656" width="28" height="7" fill="#111"/><rect x="783" y="671" width="28" height="7" fill="#2e8b3d"/><path d="M783,656 l10,11 -10,11z" fill="#d22"/>
<circle cx="828" cy="668" r="13.8" fill="#fff" fill-opacity=".35" stroke="#fff" stroke-width="2.600" opacity="0.85"/>
<circle cx="826" cy="673" r="13.8" fill="#e0483e" stroke="#fff" stroke-width="2.600" opacity="1"/>
<path d="M822,669 l8,8 M830,669 l-8,8" stroke="#f2b8b0" stroke-width="1.800"/>
<circle cx="862" cy="673" r="13.8" fill="#e0483e" stroke="#fff" stroke-width="2.600" opacity="1"/>
<path d="M858,669 l8,8 M866,669 l-8,8" stroke="#f2b8b0" stroke-width="1.800"/>
<circle cx="841" cy="676" r="13.8" fill="#e0483e" stroke="#fff" stroke-width="2.600" opacity="1"/>
<rect x="835" y="674" width="5" height="8" fill="#c9ccd8"/><rect x="841" y="676" width="6" height="6" fill="#6fa8e8"/><rect x="836" y="670" width="1.500" height="4" fill="#d85a4a"/><rect x="838.5" y="670" width="1.500" height="4" fill="#d85a4a"/>
<circle cx="880" cy="668" r="13.8" fill="#4f7bf0" stroke="#fff" stroke-width="2.600" opacity="1"/>
<circle cx="876" cy="678" r="13.8" fill="#fff" fill-opacity=".35" stroke="#fff" stroke-width="2.600" opacity="0.85"/>
<rect x="873" y="674" width="7" height="8" fill="#8fc3f0"/>
<circle cx="860" cy="686" r="13.8" fill="#ef8a1f" stroke="#fff" stroke-width="2.600" opacity="1"/>
<circle cx="864" cy="690" r="13.8" fill="#ef8a1f" stroke="#fff" stroke-width="2.600" opacity="1"/>
<circle cx="895" cy="688" r="13.8" fill="#ef8a1f" stroke="#fff" stroke-width="2.600" opacity="1"/>
<rect x="889" y="686" width="5" height="8" fill="#c9ccd8"/><rect x="895" y="688" width="6" height="6" fill="#6fa8e8"/><rect x="890" y="682" width="1.500" height="4" fill="#d85a4a"/><rect x="892.5" y="682" width="1.500" height="4" fill="#d85a4a"/>
<circle cx="923" cy="684" r="14.8" fill="#4fae7b" stroke="#fff" stroke-width="2.600" opacity="1"/>
<text x="923" y="689" text-anchor="middle" font-size="13.500" font-weight="bold" fill="#fff" letter-spacing="-.5">JO</text>
<circle cx="867" cy="697" r="13.8" fill="#e0483e" stroke="#fff" stroke-width="2.600" opacity="1"/>
<circle cx="867" cy="697" r="6" fill="#f7c83a"/><path d="M867,697 l-5,-3 a6,6 0 0 1 10,0z M867,697 l2.500,5.200 a6,6 0 0 1 -5,0z" fill="#3a2a1a" opacity=".85"/><circle cx="867" cy="697" r="1.300" fill="#f7c83a"/>
<circle cx="827" cy="699" r="13.8" fill="url(#ph1)" stroke="#fff" stroke-width="2.600"/>
<path d="M824,705 l4,-12 1.500,0.500 -2.500,12z" fill="#f4ead8"/><ellipse cx="826" cy="706" rx="8" ry="4" fill="#c8b898" opacity=".8"/>
<circle cx="838" cy="719" r="13.8" fill="#4fae7b" stroke="#fff" stroke-width="2.600" opacity="1"/>
<path d="M831,717 l7,-5 7,5z M832,718 h2.500 v6 h-2.500z M836.75,718 h2.500 v6 h-2.500z M841.5,718 h2.500 v6 h-2.500z M830.5,724.5 h15 v2 h-15z" fill="#d9d5e0"/>
<circle cx="841" cy="738" r="13.8" fill="#fff" fill-opacity=".35" stroke="#fff" stroke-width="2.600" opacity="0.85"/>
<rect x="837" y="734" width="8" height="8" fill="#5a8fd8"/>
<circle cx="880" cy="739" r="13.8" fill="#4fae7b" stroke="#fff" stroke-width="2.600" opacity="1"/>
<path d="M880,732 l6,2 q0,8 -6,12 q-6,-4 -6,-12z" fill="#7ab4f0"/><path d="M880,732 l6,2 q0,8 -6,12z" fill="#4a8ae0"/>
<circle cx="801" cy="751" r="13.8" fill="url(#ph4)" stroke="#fff" stroke-width="2.600"/>
<path d="M792,752 l14,-7 3,3 -13,8z" fill="#eef0f4"/><rect x="793" y="755" width="14" height="4" fill="#14161e"/>
<circle cx="855" cy="767" r="13.8" fill="url(#ph1)" stroke="#fff" stroke-width="2.600"/>
<path d="M852,773 l4,-12 1.500,0.500 -2.500,12z" fill="#f4ead8"/><ellipse cx="854" cy="774" rx="8" ry="4" fill="#c8b898" opacity=".8"/>
<circle cx="929" cy="746" r="16" fill="#8b5cf6" opacity="1"/>
<path d="M924,750 a6,6 0 0 1 8,-9z" fill="#ddd6f3"/><path d="M928,745 l5,-5" stroke="#c9bff0" stroke-width="1.200"/><path d="M923,753 l3,-4 4,2 v2z" fill="#cfc6ee"/>
<circle cx="918" cy="767" r="16" fill="#8b5cf6" opacity="1"/>
<path d="M913,771 a6,6 0 0 1 8,-9z" fill="#ddd6f3"/><path d="M917,766 l5,-5" stroke="#c9bff0" stroke-width="1.200"/><path d="M912,774 l3,-4 4,2 v2z" fill="#cfc6ee"/>
<circle cx="863" cy="813" r="13.8" fill="url(#ph2)" stroke="#fff" stroke-width="2.600"/>
<path d="M857,806 l9,12 -3,3 -8,-13z" fill="#2a2a28"/><rect x="861" y="817" width="8" height="5" fill="#3a3a30"/>
<circle cx="853" cy="849" r="13.8" fill="#4fae7b" stroke="#fff" stroke-width="2.600" opacity="0.7"/>
<circle cx="857" cy="852" r="14.8" fill="#4fae7b" stroke="#fff" stroke-width="2.600" opacity="1"/>
<text x="857" y="857" text-anchor="middle" font-size="13.500" font-weight="bold" fill="#fff" letter-spacing="-.5">JO</text>
<rect x="734" y="738" width="30" height="30" rx="6" fill="#e03a3a" opacity=".5" filter="url(#glow)"/><rect x="737.500" y="740.500" width="23" height="23" rx="4" fill="#b8651a" stroke="#fff" stroke-width="1.500"/><path d="M742,758 v-7 q1,-4 4,-3 q2,-3 4,0 q3,-1 3,-5 h2 v4 q0,4 -2,5 v6 h-1.500 v-5 h-5 v5z" fill="#e8b878"/>
<circle cx="762" cy="739" r="5.500" fill="#2a2a35" stroke="#fff" stroke-width="1"/><text x="762" y="741" text-anchor="middle" font-size="5" font-weight="bold" fill="#fff">EG</text>
<circle cx="1617" cy="466" r="13" fill="#f08a8a" opacity=".55"/><text x="1617" y="470.500" text-anchor="middle" font-size="12" font-weight="bold" fill="#fff" opacity=".85">?</text>
<rect x="1598" y="421" width="32" height="32" rx="6" fill="#e03a3a" opacity=".35" filter="url(#glow)"/><rect x="1602.500" y="425.500" width="23" height="23" rx="3" fill="#7a1e1e" stroke="#fff" stroke-width="1.500"/><rect x="1606" y="437" width="7" height="8" fill="#e8a03a"/><rect x="1613" y="432" width="8" height="13" fill="#5faf5a"/>
<circle cx="1626" cy="426" r="5.500" fill="#2a2a35" stroke="#fff" stroke-width="1"/><text x="1626" y="428" text-anchor="middle" font-size="5" font-weight="bold" fill="#fff">IQ</text>
<rect x="1696" y="432" width="32" height="32" rx="6" fill="#e03a3a" opacity=".35" filter="url(#glow)"/><rect x="1700.500" y="436.500" width="23" height="23" rx="3" fill="#7a1e1e" stroke="#fff" stroke-width="1.500"/><path d="M1705,445 l7,-5 7,5z M1706,446 h2.500 v6 h-2.500z M1710.750,446 h2.500 v6 h-2.500z M1715.500,446 h2.500 v6 h-2.500z M1704.500,452.500 h15 v2 h-15z" fill="#d9d5e0"/>
<circle cx="1724" cy="436" r="5.500" fill="#2a2a35" stroke="#fff" stroke-width="1"/><text x="1724" y="438" text-anchor="middle" font-size="5" font-weight="bold" fill="#fff">IQ</text>
<circle cx="1648" cy="460" r="16" fill="#fff" stroke="#fff" stroke-width="2"/><path d="M1633,455 a15.500,15.500 0 0 1 30,0z" fill="#d22"/><path d="M1633,466 a15.500,15.500 0 0 0 30,0z" fill="#111"/><text x="1648" y="463" text-anchor="middle" font-size="5" fill="#1a7a3a" font-weight="bold">الله أكبر</text></svg>
<style>
#hud{position:absolute;left:279px;top:52px;width:1376px;height:144px;background:#2a3040;border-radius:9px;box-shadow:0 4px 14px rgba(0,0,0,.25)}
.sc{position:absolute;top:17px;width:120px;height:101px;background:#0b0b0d;border:1.5px solid #888;border-radius:11px}
.sc .ti{position:absolute;right:32px;top:10px;font-size:12px;font-weight:bold;color:#fff;white-space:nowrap;direction:rtl}
.sc .ic{position:absolute;right:8px;top:8px;width:15px;height:15px}
.sc .va{position:absolute;right:8px;top:33px;font-size:18.2px;font-weight:bold;white-space:nowrap;letter-spacing:-0.3px}
.sc .ba{position:absolute;left:8px;right:8px;top:60.5px;height:3px;border-radius:2px;background:#232325}
.sc .su{position:absolute;right:8px;top:70px;font-size:12px;color:#bdbdbd;white-space:nowrap;direction:rtl}
.sc.lo .ti{top:15px;right:37.500px}.sc.lo .ic{top:12px;width:17px;height:17px;right:9px}.sc.lo .va{top:41px}.sc.lo .ba{top:69px}.sc.lo .su{top:78px}
.pill{position:absolute;background:rgba(62,70,88,.93);color:#d6dae2;font-size:11.5px;border-radius:12px;white-space:nowrap;direction:rtl;text-align:center;line-height:23px;height:23px}
.pill .pi{display:inline-block;vertical-align:-1.500px;margin-left:4px}

</style>
<div id="hud">
  <div class="abs" style="left:16px;top:56px;width:34px;height:32px;background:#4361ee;border-radius:6px">
    <svg class="abs" style="left:9px;top:8px" width="16" height="16" viewBox="0 0 24 24" fill="none" stroke="#fff" stroke-width="2" stroke-linecap="round" stroke-linejoin="round"><circle cx="12" cy="12" r="3"/><path d="M12.22 2h-.44a2 2 0 0 0-2 2v.18a2 2 0 0 1-1 1.73l-.43.25a2 2 0 0 1-2 0l-.15-.08a2 2 0 0 0-2.73.73l-.22.38a2 2 0 0 0 .73 2.73l.15.1a2 2 0 0 1 1 1.72v.51a2 2 0 0 1-1 1.74l-.15.09a2 2 0 0 0-.73 2.73l.22.38a2 2 0 0 0 2.73.73l.15-.08a2 2 0 0 1 2 0l.43.25a2 2 0 0 1 1 1.73V20a2 2 0 0 0 2 2h.44a2 2 0 0 0 2-2v-.18a2 2 0 0 1 1-1.73l.43-.25a2 2 0 0 1 2 0l.15.08a2 2 0 0 0 2.73-.73l.22-.39a2 2 0 0 0-.73-2.73l-.15-.08a2 2 0 0 1-1-1.74v-.5a2 2 0 0 1 1-1.74l.15-.09a2 2 0 0 0 .73-2.73l-.22-.38a2 2 0 0 0-2.73-.73l-.15.08a2 2 0 0 1-2 0l-.43-.25a2 2 0 0 1-1-1.73V4a2 2 0 0 0-2-2z"/></svg>
  </div>
  <div class="abs" style="left:67px;top:43px;width:80px;height:57px;background:#1c202c;border:1px solid #3b4252;border-radius:8px">
    <div class="t r" style="right:41px;top:7.500px;font-size:12.5px;font-weight:bold;color:#fff">בהיר</div>
    <div class="t r" style="right:41px;top:24.500px;font-size:11.5px;color:#b8bcc6">דיוק:</div>
    <div class="t" style="left:9px;top:39px;font-size:11.5px;color:#b8bcc6">100%</div>
    <svg class="abs" style="right:11px;top:19px" width="20" height="20" viewBox="0 0 20 20"><defs><radialGradient id="sun" cx=".4" cy=".4" r=".7"><stop offset="0" stop-color="#ffd84a"/><stop offset="1" stop-color="#f2a21e"/></radialGradient></defs><polygon points="19.20,10.00 17.41,11.69 18.29,13.99 15.94,14.74 15.74,17.19 13.30,16.85 12.05,18.97 10.00,17.60 7.95,18.97 6.70,16.85 4.26,17.19 4.06,14.74 1.71,13.99 2.59,11.69 0.80,10.00 2.59,8.31 1.71,6.01 4.06,5.26 4.26,2.81 6.70,3.15 7.95,1.03 10.00,2.40 12.05,1.03 13.30,3.15 15.74,2.81 15.94,5.26 18.29,6.01 17.41,8.31" fill="#ec9a1c"/><circle cx="10" cy="10" r="7.400" fill="url(#sun)"/></svg>
  </div>
  <div class="abs" style="left:163px;top:35px;width:88px;height:74px;border:1.5px solid #e3b81f;border-radius:7px;background:#232938">
    <div class="t" style="right:15px;top:14px;font-size:17px;font-weight:bold;color:#f4cf2a;letter-spacing:-.3px">131745</div>
    <div class="t r" style="right:15px;top:43px;font-size:18px;font-weight:bold;color:#f4cf2a">נק'</div>
  </div>
  <div class="abs" style="left:266px;top:35px;width:70px;height:74px;border:1.5px solid #f3f4f6;border-radius:7px;background:#232938">
    <div class="t r" style="right:15px;top:14px;font-size:18px;font-weight:bold;color:#fff">רמה</div>
    <div class="t" style="right:15px;top:42px;font-size:18px;font-weight:bold;color:#fff">45</div>
  </div>

  <div class="sc lo" style="left:344px;border-color:#c0392b">
    <svg class="ic" viewBox="0 0 24 24"><path d="M12 3 L22.5 21 H1.5Z" fill="#f5b942" stroke="#f5b942" stroke-width="2" stroke-linejoin="round"/><rect x="11" y="9" width="2" height="7" fill="#5a3b00"/><rect x="11" y="17.5" width="2" height="2" fill="#5a3b00"/></svg>
    <div class="ti">רמת איום</div><div class="va" style="color:#f87171">100%</div><div class="ba"></div><div class="su">קיצוני</div>
  </div>
  <div class="sc" style="left:472px;border-color:#3a8fb7">
    <svg class="ic" viewBox="0 0 24 24" fill="none" stroke="#5fd068" stroke-width="2.2" stroke-linecap="round" stroke-linejoin="round"><polyline points="22 7 13.5 15.5 8.5 10.5 2 17"/><polyline points="16 7 22 7 22 13"/></svg>
    <div class="ti">כלכלה</div><div class="va" style="color:#6ee07a;font-size:19px;top:32.500px">28,274<span style="font-size:11px">₪</span>+</div><div class="su" style="top:62px;font-size:12.5px">מגמה חיובית</div>
  </div>
  <div class="sc" style="left:600px;border-color:#d9782a">
    <svg class="ic" viewBox="0 0 24 24" fill="none" stroke="#f5a742" stroke-width="2.2" stroke-linecap="round" stroke-linejoin="round"><path d="M20 13c0 5-3.5 7.500-7.660 8.950a1 1 0 0 1-.670-.010C7.500 20.500 4 18 4 13V6a1 1 0 0 1 1-1c2 0 4.500-1.200 6.240-2.720a1.170 1.170 0 0 1 1.520 0C14.510 3.810 17 5 19 5a1 1 0 0 1 1 1z"/></svg>
    <div class="ti">מערכות</div><div class="va" style="color:#f5a742">100%</div><div class="ba"></div><div class="su">17/17 פעילות</div>
  </div>
  <div class="sc lo" style="left:728px;border-color:#8b5cf6">
    <svg class="ic" viewBox="0 0 24 24" fill="#6d4fc4"><circle cx="8" cy="8" r="4.2"/><circle cx="16.500" cy="8" r="4.2"/><path d="M0.500 21c0-5 3-7.500 7.500-7.500s7.500 2.500 7.500 7.500z"/><path d="M9 21c0-5 3-7.500 7.500-7.500S24 16 24 21z" fill="#8466d8"/></svg>
    <div class="ti">אוכלוסייה</div><div class="va" style="color:#b58cf8">104%</div><div class="ba"></div><div class="su">9.9M נותרו</div>
  </div>
  <div class="sc" style="left:856px;border-color:#c0392b">
    <svg class="ic" viewBox="0 0 24 24" fill="none" stroke="#f87171" stroke-width="2.2" stroke-linecap="round" stroke-linejoin="round"><path d="M19 14c1.490-1.460 3-3.210 3-5.500A5.500 5.500 0 0 0 16.500 3c-1.760 0-3 .5-4.500 2-1.500-1.500-2.740-2-4.500-2A5.500 5.500 0 0 0 2 8.500c0 2.300 1.500 4.050 3 5.500l7 7Z"/></svg>
    <div class="ti">מוראל</div><div class="va" style="color:#6ee07a">100%</div><div class="ba"></div><div class="su">גבוה</div>
  </div>
  <div class="sc" style="left:984px;border-color:#3b5bdb">
    <svg class="ic" viewBox="0 0 24 24" fill="none" stroke="#6ea0f8" stroke-width="2.2" stroke-linecap="round" stroke-linejoin="round"><path d="M4 14a1 1 0 0 1-.780-1.630l9.900-10.200a.5.500 0 0 1 .860.460l-1.920 6.020A1 1 0 0 0 13 10h7a1 1 0 0 1 .780 1.630l-9.900 10.200a.5.500 0 0 1-.860-.460l1.920-6.020A1 1 0 0 0 11 14z"/></svg>
    <div class="ti">חשמל</div><div class="va" style="color:#6ea0f8">158%</div><div class="ba"></div><div class="su">מצוין</div>
  </div>
  <div class="sc" style="left:1112px;border-color:#c9981f">
    <svg class="ic" viewBox="0 0 24 24" fill="none" stroke="#f4cf2a" stroke-width="2.2" stroke-linecap="round" stroke-linejoin="round"><line x1="12" y1="2" x2="12" y2="22"/><path d="M17 5H9.500a3.500 3.500 0 0 0 0 7h5a3.500 3.500 0 0 1 0 7H6"/></svg>
    <div class="ti">תקציב</div><div class="va" style="color:#f4cf2a"><span style="font-size:11px">₪</span>271587K</div><div class="su" style="top:62px;font-size:12.5px">מצוין</div>
  </div>
  <div class="sc" style="left:1240px;border-color:#3f9c4a">
    <svg class="ic" viewBox="0 0 24 24" fill="none" stroke="#5fd068" stroke-width="2.2" stroke-linecap="round" stroke-linejoin="round"><path d="M22 12h-2.480a2 2 0 0 0-1.930 1.460l-2.350 8.360a.250.250 0 0 1-.480 0L9.240 2.180a.250.250 0 0 0-.480 0l-2.350 8.360A2 2 0 0 1 4.490 12H2"/></svg>
    <div class="ti">יירוטים</div><div class="va" style="color:#6ee07a">157%</div><div class="ba"></div><div class="su">314/200</div>
  </div>
</div>
<div class="pill" style="left:919px;top:41px;width:95px"><svg class="pi" width="12" height="11" viewBox="0 0 12 11"><rect width="12" height="11" rx="2" fill="#3f8ef5"/><path d="M1.500 5.500L4.500 2.800v1.700h3V2.800l3 2.700-3 2.700V6.500h-3v1.700z" fill="#fff"/></svg>ניתן לגרירה</div>
<div class="abs" style="left:1640px;top:45px;width:23px;height:23px;border-radius:50%;background:#4caf50"><div class="abs" style="left:5px;top:5px;width:13px;height:13px;background:#ece6f4;border-radius:1px;overflow:hidden"><svg width="13" height="13" viewBox="0 0 13 13"><path d="M1 2 L5 6 L8 5 L12 11" stroke="#e0304a" stroke-width="2" fill="none"/></svg></div></div>
<style>
.lb{position:absolute;left:24px;width:38px;height:38px;border-radius:8px;background:#5468c8;border:1.500px solid #4a62dc;box-shadow:0 2px 6px rgba(0,0,0,.25)}
.lb svg{position:absolute;left:9.500px;top:9.500px}
</style>
<div class="lb" style="top:53px;background:#4a63e6;box-shadow:0 0 0 2px #7fa2ff,0 2px 6px rgba(0,0,0,.25)"><svg width="16" height="16" viewBox="0 0 24 24" fill="none" stroke="#fff" stroke-width="2.200" stroke-linecap="round" stroke-linejoin="round"><path d="M14.106 5.553a2 2 0 0 0 1.788 0l3.659-1.830A1 1 0 0 1 21 4.619v12.764a1 1 0 0 1-.553.894l-4.553 2.277a2 2 0 0 1-1.788 0l-4.212-2.106a2 2 0 0 0-1.788 0l-3.659 1.830A1 1 0 0 1 3 19.381V6.618a1 1 0 0 1 .553-.894l4.553-2.277a2 2 0 0 1 1.788 0z"/><path d="M15 5.764v15"/><path d="M9 3.236v15"/></svg></div>
<div class="lb" style="top:97px"><svg width="16" height="16" viewBox="0 0 24 24" fill="none" stroke="#fff" stroke-width="2.200" stroke-linecap="round" stroke-linejoin="round"><path d="M13 7 9 3 5 7l4 4"/><path d="m17 11 4 4-4 4-4-4"/><path d="m8 12 4 4 6-6-4-4Z"/><path d="m16 8 3-3"/><path d="M9 21a6 6 0 0 0-6-6"/></svg></div>
<div class="lb" style="top:141px"><svg width="16" height="16" viewBox="0 0 24 24" fill="none" stroke="#fff" stroke-width="2.200" stroke-linecap="round" stroke-linejoin="round"><polygon points="3 11 22 2 13 21 11 13 3 11"/></svg></div>
<div class="lb" style="top:185px"><svg width="16" height="16" viewBox="0 0 24 24" fill="none" stroke="#fff" stroke-width="2.200" stroke-linecap="round" stroke-linejoin="round"><path d="M12.830 2.180a2 2 0 0 0-1.660 0L2.600 6.080a1 1 0 0 0 0 1.830l8.580 3.910a2 2 0 0 0 1.660 0l8.580-3.900a1 1 0 0 0 0-1.830z"/><path d="M2 12a1 1 0 0 0 .580.910l8.600 3.910a2 2 0 0 0 1.650 0l8.580-3.900A1 1 0 0 0 22 12"/><path d="M2 17a1 1 0 0 0 .580.910l8.600 3.910a2 2 0 0 0 1.650 0l8.580-3.900A1 1 0 0 0 22 17"/></svg></div>
<!-- left edge widget -->
<div class="abs" style="z-index:5;left:9px;top:672px;width:25px;height:52px;background:#f3f3f0;border:2px solid #8cc665;border-left:0;border-radius:0 6px 6px 0"></div>
<div class="abs" style="z-index:5;left:14.500px;top:680.500px;width:12.500px;height:12.500px;border-radius:50%;background:#222"></div>
<svg class="abs" style="z-index:5;left:14px;top:680px" width="13.500" height="13.500" viewBox="0 0 14 14"><path d="M4.500 4.500l5 5M9.500 4.500l-5 5" stroke="#fff" stroke-width="1.800" stroke-linecap="round"/></svg>
<div class="abs" style="z-index:5;left:13px;top:700px;width:16px;height:16px;border-radius:5.500px;border:1.600px solid #17868a;background:#fff"></div>
<div class="t" style="z-index:5;left:17.300px;top:700.500px;font-size:12.500px;font-weight:bold;color:#17868a">e</div>
<style>
#dash{position:absolute;left:30px;top:211px;width:383px;height:654px;background:#1a2033;border:1.5px solid #5f8ff0;border-radius:12px;box-shadow:0 0 5px rgba(95,143,240,.5),0 3px 10px rgba(0,0,0,.25)}
#dash .card{position:absolute;height:74px;border-radius:11px;background:#1e2438;border:1px solid #555}
#dash .card .v{position:absolute;top:19px;font-size:18px;font-weight:bold;white-space:nowrap;line-height:1}
#dash .card .l{position:absolute;top:43.500px;font-size:14.500px;color:#e5e7eb;white-space:nowrap;line-height:1;direction:rtl}
#dash .mini{position:absolute;top:371px;width:95px;height:58px;border-radius:4px;border:1px solid}
#dash .mini .v{position:absolute;left:0;right:0;top:12px;text-align:center;font-size:16px;font-weight:bold;line-height:1;white-space:nowrap}
#dash .mini .l{position:absolute;left:0;right:0;top:36px;text-align:center;font-size:11.500px;color:#e5e7eb;line-height:1;direction:rtl}
#dash .tab{position:absolute;top:80px;font-size:12.200px;font-weight:bold;color:#d1d5db;white-space:nowrap;direction:rtl;line-height:1}
.emo{display:inline-block;vertical-align:-2px}
</style>
<div id="dash">
  <div class="t r" style="right:54px;top:31.500px;font-size:18.600px;font-weight:bold;color:#6ea0f8">דשבורד אסטרטגי</div>
  <svg class="abs" style="left:333px;top:28px" width="22" height="22" viewBox="0 0 22 22"><rect x="1" y="1" width="20" height="20" rx="2" fill="#e8ecf2"/><rect x="4" y="10" width="3.600" height="9" fill="#5fbf6a"/><rect x="9.200" y="6" width="3.600" height="13" fill="#e05a6a"/><rect x="14.400" y="3" width="3.600" height="16" fill="#5a9be0"/></svg>
  <div class="abs" style="left:23px;top:26px;width:24px;height:24px;border-radius:50%;background:#4361ee"><div class="abs" style="left:6px;top:6px;width:12px;height:12px;background:#ece6f4;border-radius:1px"><svg width="12" height="12" viewBox="0 0 13 13"><path d="M1 2 L5 6 L8 5 L12 11" stroke="#e0304a" stroke-width="2" fill="none"/></svg></div></div>
  <!-- tabs -->
  <div class="abs" style="left:7px;top:68px;width:366px;height:37px;background:#1f263a;border-radius:6px 6px 0 0"></div>
  <div class="tab" style="right:18px"><svg class="emo" width="13" height="13" viewBox="0 0 22 22"><rect x="1" y="1" width="20" height="20" rx="2" fill="#e8ecf2"/><rect x="4" y="10" width="3.600" height="9" fill="#5fbf6a"/><rect x="9.200" y="6" width="3.600" height="13" fill="#e05a6a"/><rect x="14.400" y="3" width="3.600" height="16" fill="#5a9be0"/></svg> מבט על</div>
  <div class="tab" style="right:94px;color:#6ea0f8"><svg class="emo" width="12" height="13" viewBox="0 0 12 13"><path d="M4 1h4l-1 2.500c3 1 4.500 3.500 4.500 6 0 2-1.500 3-5.500 3s-5.500-1-5.500-3c0-2.500 1.500-5 4.500-6z" fill="#d8a23a"/><circle cx="6" cy="8.500" r="2" fill="#f7d774"/></svg> כלכלה</div>
  <div class="abs" style="left:226px;top:100px;width:71px;height:2px;background:#4f7bf0"></div>
  <div class="tab" style="right:164px"><svg class="emo" width="13" height="13" viewBox="0 0 13 13"><path d="M1 1l9 9M12 1l-9 9" stroke="#b8c2d0" stroke-width="1.800"/><path d="M1.500 9.500l2 2M11.500 9.500l-2 2" stroke="#7a5a3a" stroke-width="2.200"/></svg> איומים</div>
  <div class="tab" style="right:234px"><svg class="emo" width="14" height="11" viewBox="0 0 14 11"><path d="M0 3l4-2 3 1 3-1 4 2-2 5-4 3-2 0-4-3z" fill="#f2b63c"/></svg> בריתות</div>
  <div class="tab" style="right:308px"><svg class="emo" width="11" height="13" viewBox="0 0 11 13"><circle cx="5.500" cy="5" r="3" fill="#e7b98a"/><path d="M1 4h9l-1.500-3h-6z" fill="#4a3a5a"/><path d="M0 13c0-3 2.500-4.500 5.500-4.500s5.500 1.500 5.500 4.500z" fill="#5a4a7a"/></svg> מודיעין</div>
  <!-- scrollbar -->
  <div class="abs" style="left:7px;top:107px;width:366px;height:15px;background:#fafafa"></div>
  <div class="abs" style="left:161px;top:110px;width:194px;height:9px;border-radius:5px;background:#8e8e8e"></div>
  <svg class="abs" style="left:11px;top:109px" width="8" height="11" viewBox="0 0 8 11"><path d="M7 1v9L1 5.500z" fill="#8a8a8a"/></svg>
  <svg class="abs" style="left:361px;top:109px" width="8" height="11" viewBox="0 0 8 11"><path d="M1 1v9l6-4.500z" fill="#8a8a8a"/></svg>
  <!-- cards -->
  <div class="card" style="left:196px;top:134px;width:177px;border-color:#7d6a1f">
    <svg class="abs" style="right:9px;top:27px" width="20" height="20" viewBox="0 0 24 24" fill="none" stroke="#f4cf2a" stroke-width="2" stroke-linecap="round" stroke-linejoin="round"><line x1="12" y1="2" x2="12" y2="22"/><path d="M17 5H9.500a3.500 3.500 0 0 0 0 7h5a3.500 3.500 0 0 1 0 7H6"/></svg>
    <div class="v" style="right:40px;color:#f4cf2a">271,587,177<span style="font-size:11px">₪</span></div><div class="l" style="right:40px">תקציב נוכחי</div>
  </div>
  <div class="card" style="left:7px;top:134px;width:177px;border-color:#2f4ea0">
    <svg class="abs" style="right:11px;top:27px" width="20" height="20" viewBox="0 0 24 24" fill="none" stroke="#6ea0f8" stroke-width="2" stroke-linecap="round" stroke-linejoin="round"><path d="M16 21v-2a4 4 0 0 0-4-4H6a4 4 0 0 0-4 4v2"/><circle cx="9" cy="7" r="4"/><path d="M22 21v-2a4 4 0 0 0-3-3.870"/><path d="M16 3.130a4 4 0 0 1 0 7.750"/></svg>
    <div class="v" style="right:41px;color:#6ea0f8">9.9M</div><div class="l" style="right:41px">אוכלוסיה</div>
  </div>
  <div class="card" style="left:196px;top:220px;width:177px;border-color:#8f3a3a">
    <svg class="abs" style="right:11px;top:27px" width="20" height="20" viewBox="0 0 24 24" fill="none" stroke="#f87171" stroke-width="2" stroke-linecap="round" stroke-linejoin="round"><path d="M19 14c1.490-1.460 3-3.210 3-5.500A5.500 5.500 0 0 0 16.500 3c-1.760 0-3 .5-4.500 2-1.500-1.500-2.740-2-4.500-2A5.500 5.500 0 0 0 2 8.500c0 2.300 1.500 4.050 3 5.500l7 7Z"/></svg>
    <div class="v" style="right:40px;color:#f87171">100%</div><div class="l" style="right:40px">מוראל לאומי</div>
  </div>
  <div class="card" style="left:7px;top:220px;width:177px;border-color:#2f7a3f">
    <svg class="abs" style="right:11px;top:27px" width="20" height="20" viewBox="0 0 24 24" fill="none" stroke="#6ee07a" stroke-width="2" stroke-linecap="round" stroke-linejoin="round"><path d="M4 14a1 1 0 0 1-.780-1.630l9.900-10.200a.5.500 0 0 1 .860.460l-1.920 6.020A1 1 0 0 0 13 10h7a1 1 0 0 1 .780 1.630l-9.900 10.200a.5.500 0 0 1-.860-.460l1.920-6.020A1 1 0 0 0 11 14z"/></svg>
    <div class="v" style="right:41px;color:#6ee07a">158%</div><div class="l" style="right:41px">רמת חשמל</div>
  </div>
  <!-- balance -->
  <div class="abs" style="left:8px;top:309px;width:365px;height:145px;border:1px solid #5b3fa8;border-radius:11px;background:#1c2337"></div>
  <div class="t r" style="right:33px;top:341px;font-size:17px;font-weight:bold;color:#b58cf8">מאזן כלכלי</div>
  <div class="mini" style="left:253px;border-color:#2f7a3f;background:#1d3a33"><div class="v" style="color:#6ee07a">31,672<span style="font-size:10px">₪</span> <span style="font-weight:normal">↑</span></div><div class="l">הכנסות</div></div>
  <div class="mini" style="left:143px;border-color:#8f3a3a;background:#46272f"><div class="v" style="color:#f87171">3,398<span style="font-size:10px">₪</span> <span style="font-weight:normal">↓</span></div><div class="l">הוצאות</div></div>
  <div class="mini" style="left:32px;border-color:#2f7a3f;background:#1d3a33"><div class="v" style="color:#6ee07a">28,274<span style="font-size:10px">₪</span>+</div><div class="l">רווח נקי</div></div>
  <!-- summary -->
  <div class="abs" style="left:8px;top:470px;width:365px;height:175px;border:1px solid #2f4ea0;border-radius:11px;background:#1c2337"></div>
  <div class="t r" style="right:33px;top:501px;font-size:17px;font-weight:bold;color:#6ea0f8">סיכום כללי</div>
  <div class="t r" style="right:33px;top:537px;font-size:16.300px;color:#e5e7eb">רמה נוכחית:</div>
  <div class="abs" style="left:198px;top:532px;width:37px;height:24px;border-radius:6px;background:#4361ee"></div><div class="t" style="left:209px;top:538px;font-size:12.500px;font-weight:bold;color:#fff">45</div>
  <div class="t r" style="right:199px;top:537px;font-size:16.300px;color:#e5e7eb">ניקוד כולל:</div>
  <div class="t" style="left:33px;top:537px;font-size:16.300px;font-weight:bold;color:#f4cf2a">131,745</div>
  <div class="t r" style="right:33px;top:577px;font-size:16.300px;color:#e5e7eb">נקודות</div>
  <div class="t r" style="right:33px;top:601px;font-size:16.300px;color:#e5e7eb">מחקר:</div>
  <div class="t" style="left:198px;top:577px;font-size:16.300px;font-weight:bold;color:#b58cf8">999998736</div>
  <div class="t r" style="right:199px;top:577px;font-size:16.300px;color:#e5e7eb">יעילות כללית:</div>
  <div class="t" style="left:33px;top:577px;font-size:16.300px;font-weight:bold;color:#6ee07a">129%</div>
</div>
<div class="pill" style="left:173px;top:201px;width:96px"><svg class="pi" width="12" height="11" viewBox="0 0 12 11"><rect width="12" height="11" rx="2" fill="#3f8ef5"/><path d="M1.500 5.500L4.500 2.800v1.700h3V2.800l3 2.700-3 2.700V6.500h-3v1.700z" fill="#fff"/></svg>ניתן לגרירה</div>
<div class="abs" style="left:398px;top:204px;width:23px;height:23px;border-radius:50%;background:#4361ee"><div class="abs" style="left:5px;top:5px;width:13px;height:13px;background:#ece6f4;border-radius:1px"><svg width="13" height="13" viewBox="0 0 13 13"><path d="M1 2 L5 6 L8 5 L12 11" stroke="#e0304a" stroke-width="2" fill="none"/></svg></div></div>
<style>
.st{position:absolute;left:1655px;width:256px;height:73px;background:rgba(16,16,16,.88);border:1.5px solid #d4a72c;border-radius:11px}
.st .h{position:absolute;right:80px;top:14px;font-size:14px;font-weight:bold;color:#fff;white-space:nowrap;direction:rtl;line-height:1}
.st .s{position:absolute;right:56px;top:34px;font-size:12.300px;color:#d1d5db;white-space:nowrap;direction:rtl;line-height:1}
.st .tr{position:absolute;left:13px;right:13px;top:56px;height:3px;border-radius:2px;background:rgba(60,60,60,.6)}
.st .fi{position:absolute;left:13px;top:56px;height:3px;border-radius:2px;background:#151515}
</style>
<div class="st" style="top:53px">
  <div class="h">עמידות EMP</div><div class="s">זמן נותר: 49 שניות</div>
  <svg class="abs" style="right:62px;top:13px;right:auto;left:183px" width="9" height="14" viewBox="0 0 9 14"><path d="M6 0L0 8h3.500L2.500 14 9 5.500H5z" fill="#f59e42"/></svg>
  <svg class="abs" style="left:218px;top:19px" width="14" height="24" viewBox="0 0 14 24"><defs><linearGradient id="bo" x1="0" y1="0" x2="0" y2="1"><stop offset="0" stop-color="#ffb84a"/><stop offset="1" stop-color="#e8543a"/></linearGradient></defs><path d="M9 0L0 13h5.500L3.500 24 14 9H8z" fill="url(#bo)"/></svg>
  <div class="tr"></div><div class="fi" style="width:47px"></div>
</div>
<div class="abs" style="left:1879px;top:100px;width:32px;height:32px;border-radius:6px;background:#2d3444;box-shadow:0 1px 4px rgba(0,0,0,.4)"></div>
<svg class="abs" style="left:1888px;top:110px" width="13" height="13" viewBox="0 0 13 13"><circle cx="6.500" cy="6.500" r="5.300" fill="#fff" stroke="#e53950" stroke-width="2.200"/><path d="M3 3l7 7" stroke="#e53950" stroke-width="2.200"/></svg>
<div class="st" style="top:139px">
  <div class="h">זיהוי מנהרות</div><div class="s">זמן נותר: 109 שניות</div>
  <div class="abs" style="left:181px;top:17px;width:13px;height:8px;border-radius:50%;background:#2a1a5a;border-top:1px solid #9a86d8"></div>
  <div class="abs" style="left:214px;top:25px;width:23px;height:14px;border-radius:50%;background:radial-gradient(ellipse at 50% 60%,#1a0f4a,#3a2490);border-top:1.500px solid #c8bdf0"></div>
  <div class="tr"></div><div class="fi" style="width:84px"></div>
</div>
<style>
#bp{position:absolute;left:1179px;top:302px;width:382px;height:599px;background:#252b3b;border-radius:9px;overflow:hidden;box-shadow:0 6px 18px rgba(0,0,0,.3)}
#bp .tabl{position:absolute;top:82px;font-size:14px;font-weight:bold;color:#f3f4f6;line-height:1;white-space:nowrap}
.it{position:absolute;left:24px;width:341px;height:94px;background:#fff;border-radius:5px;color:#111}
.it .n{position:absolute;right:46px;top:21px;font-size:13.800px;font-weight:bold;color:#111;white-space:nowrap;direction:rtl;line-height:1}
.it .d{position:absolute;right:13px;top:49px;font-size:12.800px;color:#4b5563;white-space:nowrap;direction:rtl;line-height:1}
.it .c{position:absolute;right:33px;top:68px;font-size:12.500px;color:#eec522;white-space:nowrap;line-height:1;letter-spacing:-.2px}
.it .q{position:absolute;left:13px;top:68px;font-size:12.500px;color:#b58cf8;white-space:nowrap;line-height:1}
.it .bag{position:absolute;right:15px;top:66px}
.it .mic{position:absolute;left:32px;top:66px}
.it .e{position:absolute;right:16px;top:13px}
</style>
<div id="bp">
  <div class="abs" style="left:0;top:0;width:382px;height:26px;background:#343a4b"></div>
  <div class="t r" style="left:0;right:0;text-align:center;top:8px;font-size:12px;color:#c3c8d2">⠿ גרור כאן ⠿</div>
  <div class="abs" style="left:0;top:25px;width:382px;height:6px;background:#6a7082"></div>
  <div class="abs" style="left:175px;top:25px;width:32px;height:4px;border-radius:2px;background:#8a90a0"></div>
  <div class="abs" style="left:6px;top:31px;width:367px;height:32px;background:#fff;border-radius:6px"></div>
  <svg class="abs" style="left:219px;top:41px" width="13" height="13" viewBox="0 0 13 13"><circle cx="5" cy="5" r="3.800" fill="#bfe3f7" stroke="#3b82c4" stroke-width="1.400"/><path d="M8 8l4 4" stroke="#7a3a8a" stroke-width="2" stroke-linecap="round"/></svg>
  <div class="abs" style="left:0;top:71px;width:379px;height:36px;background:#343b4d;border-radius:6px"></div>
  <div class="abs" style="left:301px;top:75px;width:76px;height:28px;background:#fff;border-radius:6px"></div>
  <div class="tabl" style="left:299.3px;width:80px;text-align:center;direction:rtl;color:#111">הגנה</div>
  <div class="tabl" style="left:224.3px;width:80px;text-align:center;direction:rtl">מחקר</div>
  <div class="tabl" style="left:149.7px;width:80px;text-align:center;direction:rtl">תקיפה</div>
  <div class="tabl" style="left:74.6px;width:80px;text-align:center;direction:rtl">בנייה</div>
  <div class="tabl" style="left:-0.3px;width:80px;text-align:center;direction:rtl">פיקוד</div>
  <!-- scrollbar -->
  <div class="abs" style="left:3px;top:355px;width:4px;height:39px;border-radius:2px;background:#4b5364"></div>
  <svg class="abs" style="left:2px;top:118px" width="6" height="5" viewBox="0 0 6 5"><path d="M0 5L3 0l3 5z" fill="#4b5364"/></svg>
  <svg class="abs" style="left:2px;top:590px" width="6" height="5" viewBox="0 0 6 5"><path d="M0 0l3 5 3-5z" fill="#4b5364"/></svg>
  <!-- items -->
  <div class="it" style="top:39px;clip-path:inset(75px 0 0 0)"><div class="c">15000</div><div class="q">80</div>
    <svg class="bag" width="12" height="13" viewBox="0 0 12 13"><path d="M4 1h4l-1 2.500c3 1 4.500 3.500 4.500 6 0 2-1.500 3-5.500 3s-5.500-1-5.500-3c0-2.500 1.500-5 4.500-6z" fill="#d8a23a"/><circle cx="6" cy="8.500" r="2" fill="#f7d774"/></svg>
    <svg class="mic" width="13" height="13" viewBox="0 0 13 13"><path d="M7 1l3 3-4 5-2-2z" fill="#9aa4b4"/><path d="M1 12h11M3 10h5" stroke="#6b7a90" stroke-width="1.600"/></svg></div>
  <div class="it" style="top:141px"><div class="n">F-16 סופה</div><div class="d">מטוס קרב רב-תכליתי מוכח</div><div class="c">8000</div><div class="q">40</div>
    <svg class="e" width="20" height="20" viewBox="0 0 20 20"><g transform="rotate(45 10 10)"><path d="M10 0.500c1.100 0 1.700 1.600 1.700 3.800v3l6.600 3.800v2.200l-6.600-2v3.600l2.200 1.600v1.500L10 17.200 6.100 18v-1.500l2.200-1.600v-3.600l-6.600 2v-2.200l6.600-3.800v-3c0-2.200.6-3.800 1.700-3.800z" fill="#eef2f8" stroke="#c8404e" stroke-width="1.100" stroke-linejoin="round"/><path d="M8.300 9.500h3.400v2H8.300z" fill="#d8454a"/></g></svg>
    <svg class="bag" width="12" height="13" viewBox="0 0 12 13"><path d="M4 1h4l-1 2.500c3 1 4.500 3.500 4.500 6 0 2-1.500 3-5.500 3s-5.500-1-5.500-3c0-2.500 1.500-5 4.500-6z" fill="#d8a23a"/><circle cx="6" cy="8.500" r="2" fill="#f7d774"/></svg>
    <svg class="mic" width="13" height="13" viewBox="0 0 13 13"><path d="M7 1l3 3-4 5-2-2z" fill="#9aa4b4"/><path d="M1 12h11M3 10h5" stroke="#6b7a90" stroke-width="1.600"/></svg></div>
  <div class="it" style="top:243px"><div class="n">מרכבה Mk4</div><div class="d">טנק קרב ראשי ישראלי</div><div class="c">8000</div><div class="q">40</div>
    <svg class="e" width="20" height="20" viewBox="0 0 20 20"><path d="M2 14v-3l3-1 2-4h7l3 4 2 1v3z" fill="#d8363a"/><rect x="7" y="7" width="6" height="3" fill="#7aa8e0"/><circle cx="6" cy="14.500" r="2.300" fill="#333"/><circle cx="15" cy="14.500" r="2.300" fill="#333"/></svg>
    <svg class="bag" width="12" height="13" viewBox="0 0 12 13"><path d="M4 1h4l-1 2.500c3 1 4.500 3.500 4.500 6 0 2-1.500 3-5.500 3s-5.500-1-5.500-3c0-2.500 1.500-5 4.500-6z" fill="#d8a23a"/><circle cx="6" cy="8.500" r="2" fill="#f7d774"/></svg>
    <svg class="mic" width="13" height="13" viewBox="0 0 13 13"><path d="M7 1l3 3-4 5-2-2z" fill="#9aa4b4"/><path d="M1 12h11M3 10h5" stroke="#6b7a90" stroke-width="1.600"/></svg></div>
  <div class="it" style="top:345px"><div class="n">תותח 155מ"מ</div><div class="d">תותח ארוך טווח</div><div class="c">6000</div><div class="q">25</div>
    <svg class="e" width="20" height="20" viewBox="0 0 20 20"><path d="M10 1l2 5 5-3-2 5 5 2-5 2 2 5-5-3-2 5-2-5-5 3 2-5-5-2 5-2-2-5 5 3z" fill="#e8323a"/><circle cx="10" cy="10" r="3" fill="#f7b23a"/></svg>
    <svg class="bag" width="12" height="13" viewBox="0 0 12 13"><path d="M4 1h4l-1 2.500c3 1 4.500 3.500 4.500 6 0 2-1.500 3-5.500 3s-5.500-1-5.500-3c0-2.500 1.500-5 4.500-6z" fill="#d8a23a"/><circle cx="6" cy="8.500" r="2" fill="#f7d774"/></svg>
    <svg class="mic" width="13" height="13" viewBox="0 0 13 13"><path d="M7 1l3 3-4 5-2-2z" fill="#9aa4b4"/><path d="M1 12h11M3 10h5" stroke="#6b7a90" stroke-width="1.600"/></svg></div>
  <div class="it" style="top:447px"><div class="n">משחתת חיל הים</div><div class="d">ספינת קרב מתקדמת</div><div class="c">12000</div><div class="q">60</div>
    <svg class="e" width="20" height="20" viewBox="0 0 20 20"><path d="M1 12h18l-2 5H3z" fill="#d8454a"/><rect x="4" y="8" width="12" height="4" fill="#e8eef6"/><rect x="7" y="4" width="7" height="4" fill="#c8d4e6"/><path d="M0 17h20v1.500H0z" fill="#6aa8e0"/></svg>
    <svg class="bag" width="12" height="13" viewBox="0 0 12 13"><path d="M4 1h4l-1 2.500c3 1 4.500 3.500 4.500 6 0 2-1.500 3-5.500 3s-5.500-1-5.500-3c0-2.500 1.500-5 4.500-6z" fill="#d8a23a"/><circle cx="6" cy="8.500" r="2" fill="#f7d774"/></svg>
    <svg class="mic" width="13" height="13" viewBox="0 0 13 13"><path d="M7 1l3 3-4 5-2-2z" fill="#9aa4b4"/><path d="M1 12h11M3 10h5" stroke="#6b7a90" stroke-width="1.600"/></svg></div>
  <div class="it" style="top:549px;clip-path:inset(0 0 46px 0)"><div class="n">טייסת רחפנים</div>
    <svg class="e" width="20" height="20" viewBox="0 0 20 20"><ellipse cx="10" cy="9" rx="9" ry="3.500" fill="#8a94a8"/><path d="M5 8a5 4 0 0 1 10 0z" fill="#7ad0e8"/><path d="M6 12l-2 7h12l-2-7z" fill="#f7e04a"/></svg></div>
</div>
<div class="pill" style="left:1322px;top:290.500px;width:96px;background:rgba(62,70,88,.8);z-index:3;opacity:.78"><svg class="pi" width="12" height="11" viewBox="0 0 12 11"><rect width="12" height="11" rx="2" fill="#3f8ef5"/><path d="M1.500 5.500L4.500 2.800v1.700h3V2.800l3 2.700-3 2.700V6.500h-3v1.700z" fill="#fff"/></svg>ניתן לגרירה</div>
<div class="abs" style="left:1547px;top:295px;width:23px;height:23px;border-radius:50%;background:#4361ee;z-index:3;opacity:.85"><div class="abs" style="left:5px;top:5px;width:13px;height:13px;background:#ece6f4;border-radius:1px"><svg width="13" height="13" viewBox="0 0 13 13"><path d="M1 2 L5 6 L8 5 L12 11" stroke="#e0304a" stroke-width="2" fill="none"/></svg></div></div>
<style>
#log{position:absolute;left:1591px;top:716px;width:320px;height:280px;background:rgba(22,23,27,.96);border-radius:13px;box-shadow:0 4px 14px rgba(0,0,0,.3)}
.ev{position:absolute;left:9px;width:302px;height:32px;border-left:3px solid #6b7280;border-radius:4px;background:#1d1e23}
.ev .tm{position:absolute;left:8px;top:10px;font-size:11.700px;color:#9ca3af;line-height:1;letter-spacing:-.3px}
.ev .tx{position:absolute;right:53px;top:10px;font-size:12.200px;color:#fff;line-height:1;white-space:nowrap;direction:rtl}
.ev .i1{position:absolute;right:9px;top:9px}
.ev .i2{position:absolute;right:33px;top:9px}
</style>
<div id="log">
  <div class="t r" style="right:25px;top:28px;font-size:12.800px;font-weight:bold;color:#fff">יומן אירועים</div>
  <div class="ev" style="top:60px;height:48px;border-left-color:#eab308;background:#2a2118">
    <div class="tm" style="top:18px">15:31:05</div>
    <div class="tx" style="top:11px;right:51px">מכ"ם זיהה טיל פתח-110 לכיוון באר</div><div class="tx" style="top:27px;right:33px">שבע!</div>
    <svg class="i1" style="top:18px" width="13" height="13" viewBox="0 0 13 13"><path d="M3 9a5 5 0 0 1 7-7z" fill="#c8c4e8"/><path d="M7 5l3-3" stroke="#5a8ae0" stroke-width="1.200"/><path d="M2 12l2-4 3 2v2z" fill="#a8a4c8"/></svg>
    <svg class="i2" style="top:9px" width="13" height="13" viewBox="0 0 13 13"><path d="M3 9a5 5 0 0 1 7-7z" fill="#c8c4e8"/><path d="M7 5l3-3" stroke="#5a8ae0" stroke-width="1.200"/><path d="M2 12l2-4 3 2v2z" fill="#a8a4c8"/></svg>
  </div>
  <div class="ev" style="top:112px;border-left-color:#4ade80;background:#1a2a1f">
    <div class="tm">15:31:05</div><div class="tx">המוראל עלה ב-0.6% - יירוט מוצלח</div>
    <svg class="i1" width="13" height="13" viewBox="0 0 13 13"><path d="M6.500 12C2 8.500 0.500 6.500 0.500 4.200 0.500 2.300 2 1 3.600 1c1.200 0 2.200.6 2.900 1.700C7.200 1.600 8.200 1 9.400 1 11 1 12.500 2.300 12.500 4.200c0 2.300-1.500 4.300-6 7.800z" fill="#e8325a"/></svg>
    <svg class="i2" width="13" height="13" viewBox="0 0 13 13"><rect width="13" height="13" rx="1.500" fill="#e8ecf6"/><path d="M1.500 10l3.500-3.500 2 1.500 4.500-5" stroke="#5a8ae0" stroke-width="1.500" fill="none"/></svg>
  </div>
  <div class="ev" style="top:148px;border-left-color:#4ade80;background:#1a2a1f">
    <div class="tm">15:31:05</div><div class="tx">המוראל עלה ב-0.6% - יירוט מוצלח</div>
    <svg class="i1" width="13" height="13" viewBox="0 0 13 13"><path d="M6.500 12C2 8.500 0.500 6.500 0.500 4.200 0.500 2.300 2 1 3.600 1c1.200 0 2.200.6 2.900 1.700C7.200 1.600 8.200 1 9.400 1 11 1 12.500 2.300 12.500 4.200c0 2.300-1.500 4.300-6 7.800z" fill="#e8325a"/></svg>
    <svg class="i2" width="13" height="13" viewBox="0 0 13 13"><rect width="13" height="13" rx="1.500" fill="#e8ecf6"/><path d="M1.500 10l3.500-3.500 2 1.500 4.500-5" stroke="#5a8ae0" stroke-width="1.500" fill="none"/></svg>
  </div>
  <div class="ev" style="top:184px">
    <div class="tm">15:31:05</div><div class="tx">בונוס נקודות: +300 נקודות נוספות</div>
    <svg class="i1" width="13" height="13" viewBox="0 0 13 13"><path d="M7 1l3 3-4 5-2-2z" fill="#9aa4d4"/><path d="M1 12h11M3 10h5" stroke="#8a9ae0" stroke-width="1.600"/></svg>
    <svg class="i2" width="13" height="13" viewBox="0 0 13 13"><path d="M6.500 0.500l1.800 4 4.200.4-3.200 2.900 1 4.200-3.800-2.300L2.700 12l1-4.200L.5 4.900l4.200-.4z" fill="#f7c83a"/></svg>
  </div>
  <div class="ev" style="top:220px">
    <div class="tm">15:31:05</div><div class="tx">בונוס מחקר: +87<span style="font-size:9px">₪</span> נוספים</div>
    <svg class="i1" width="13" height="13" viewBox="0 0 13 13"><path d="M7 1l3 3-4 5-2-2z" fill="#9aa4d4"/><path d="M1 12h11M3 10h5" stroke="#8a9ae0" stroke-width="1.600"/></svg>
    <svg class="i2" width="12" height="13" viewBox="0 0 12 13"><path d="M4 1h4l-1 2.500c3 1 4.500 3.500 4.500 6 0 2-1.500 3-5.500 3s-5.500-1-5.500-3c0-2.500 1.500-5 4.500-6z" fill="#d8a23a"/><circle cx="6" cy="8.500" r="2" fill="#f7d774"/></svg>
  </div>
</div>
<div class="pill" style="left:1703px;top:703px;width:96px;height:24px;line-height:24px"><svg class="pi" width="12" height="11" viewBox="0 0 12 11"><rect width="12" height="11" rx="2" fill="#3f8ef5"/><path d="M1.500 5.500L4.500 2.800v1.700h3V2.800l3 2.700-3 2.700V6.500h-3v1.700z" fill="#fff"/></svg>ניתן לגרירה</div>
<div class="abs" style="left:1896px;top:709px;width:23px;height:23px;border-radius:50%;background:#4361ee"><div class="abs" style="left:5px;top:5px;width:13px;height:13px;background:#ece6f4;border-radius:1px"><svg width="13" height="13" viewBox="0 0 13 13"><path d="M1 2 L5 6 L8 5 L12 11" stroke="#e0304a" stroke-width="2" fill="none"/></svg></div></div>
<div class="abs" style="left:151px;top:914px;width:160px;height:30px;background:#101012;border:1.500px solid #d9782a;border-radius:8px"></div>
<div class="t r" style="right:1633.500px;top:924px;font-size:13px;font-weight:bold;color:#e5e7eb">יומן תק</div>
<svg class="abs" style="left:287px;top:924px" width="12.500" height="12.500" viewBox="0 0 13 13"><circle cx="6.500" cy="6.500" r="6" fill="#e8325a"/><circle cx="6.500" cy="6.500" r="4" fill="#fff"/><circle cx="6.500" cy="6.500" r="2" fill="#e8325a"/><path d="M6.500 6.500L12 1" stroke="#3a6ae0" stroke-width="1.500"/></svg>
<div class="abs" style="left:191px;top:901px;width:79px;height:40px;border-radius:20px;background:rgba(62,70,88,.9)"></div>
<div class="t r" style="left:220px;top:909px;font-size:11.500px;color:#d6dae2">ניתן</div>
<div class="t r" style="left:205px;top:924px;font-size:11.500px;color:#d6dae2">לגרירה</div>
<svg class="abs" style="left:249px;top:916px" width="12" height="11" viewBox="0 0 12 11"><rect width="12" height="11" rx="2" fill="#3f8ef5"/><path d="M1.500 5.500L4.500 2.800v1.700h3V2.800l3 2.700-3 2.700V6.500h-3v1.700z" fill="#fff"/></svg>
<div class="abs" style="left:297px;top:907px;width:22px;height:22px;border-radius:50%;background:#e07a2a"><div class="abs" style="left:5px;top:5px;width:12px;height:12px;background:#ece6f4;border-radius:1px"><svg width="12" height="12" viewBox="0 0 13 13"><path d="M1 11 L5 6 L8 8 L12 2" stroke="#3a6ae0" stroke-width="2" fill="none"/></svg></div></div>
</body></html>
